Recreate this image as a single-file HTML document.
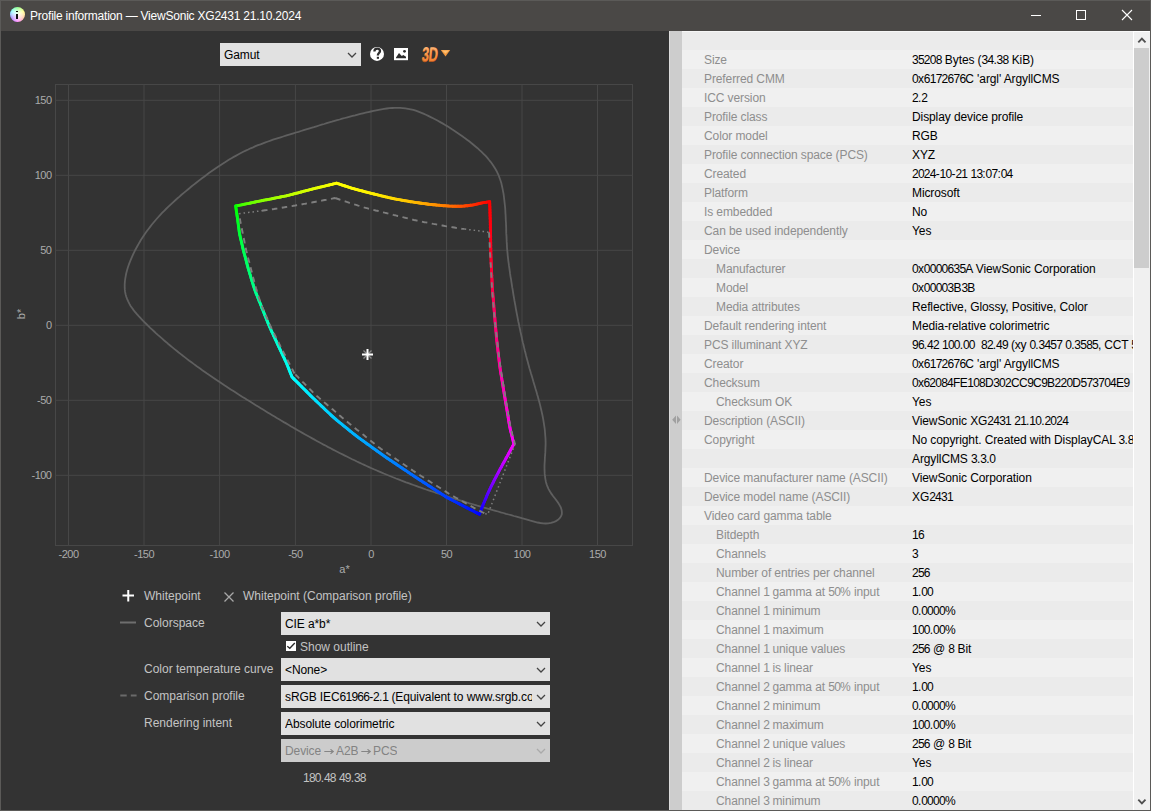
<!DOCTYPE html>
<html><head><meta charset="utf-8"><style>
html,body{margin:0;padding:0;}
body{width:1151px;height:811px;overflow:hidden;position:relative;background:#333;font-family:"Liberation Sans",sans-serif;font-size:12px;}
i{font-style:normal;letter-spacing:-0.75px;}
.abs{position:absolute;}
#title{position:absolute;left:0;top:0;width:1151px;height:31px;background:#4a4846;}
#ttext{position:absolute;left:30px;top:9px;color:#fff;font-size:12px;letter-spacing:-0.22px;white-space:nowrap;}
#ticon{position:absolute;left:10px;top:7px;width:15px;height:15px;border-radius:50%;background:conic-gradient(from 0deg,#80ff80,#ffff80,#ffc0a0,#ff80ff,#a080ff,#80ffff,#80ff80);}
#ticon::after{content:"";position:absolute;left:0;top:0;width:15px;height:15px;border-radius:50%;background:radial-gradient(circle,rgba(255,255,255,0.9) 0,rgba(255,255,255,0.5) 45%,rgba(255,255,255,0) 75%);}
#ticon b{position:absolute;left:5.9px;top:6.8px;width:2px;height:5px;background:#111;z-index:2;}
#ticon b::before{content:"";position:absolute;left:0;top:-3px;width:2px;height:1.7px;background:#111;}
#left{position:absolute;left:1px;top:31px;width:668px;height:779px;background:#333;}
.cb{position:absolute;background:#e1e1e1;color:#000;box-sizing:border-box;}
.cb span{position:absolute;left:4px;top:5px;white-space:nowrap;letter-spacing:-0.1px;overflow:hidden;right:18px;}
.cb .chev{position:absolute;right:4px;top:9px;color:#444;}
.cb.dis{background:#cccccc;color:#838383;}
.cb.dis .chev{color:#aaa;}
.lbl{position:absolute;color:#c3c3c3;white-space:nowrap;font-size:12px;}
#split{position:absolute;left:669px;top:31px;width:13px;height:779px;background:#cdcdcd;border-left:1px solid #dcdcdc;box-sizing:border-box;}
#table{position:absolute;left:682px;top:31px;width:451px;height:779px;overflow:hidden;background:#f0f0f0;}
.r{position:absolute;left:0;width:451px;height:19px;}
.r.e{background:#f0f0f0;}
.r.o{background:#ebebeb;}
.r span{position:absolute;top:3px;white-space:nowrap;}
.r .l{color:#8e8e8e;letter-spacing:-0.1px;}
.r .v{left:230px;color:#000;letter-spacing:-0.1px;}
#sb{position:absolute;left:1133px;top:31px;width:17px;height:779px;background:#f0f0f0;border-left:1px solid #fff;box-sizing:border-box;}
#thumb{position:absolute;left:0px;top:17px;width:15px;height:220px;background:#cdcdcd;}
#bord{position:absolute;left:0;top:0;width:1151px;height:811px;box-sizing:border-box;border:1px solid #5b5a58;pointer-events:none;}
svg text{font-family:"Liberation Sans",sans-serif;}
</style></head><body>
<div id="title"><div id="ticon"><b></b></div><div id="ttext">Profile information — ViewSonic XG2431 21.10.2024</div>
<svg class="abs" style="left:0;top:0" width="1151" height="31">
<line x1="1031" y1="15.5" x2="1041" y2="15.5" stroke="#fff" stroke-width="1"/>
<rect x="1076.5" y="10.5" width="9" height="9" fill="none" stroke="#fff" stroke-width="1"/>
<path d="M1122,10 L1132,20 M1132,10 L1122,20" stroke="#fff" stroke-width="1.1"/>
</svg>
</div>
<div id="left"></div>
<div class="cb" style="left:220px;top:43px;width:141px;height:23px"><span>Gamut</span><svg class="chev" width="10" height="6" viewBox="0 0 10 6"><path d="M1,1 L5,5 L9,1" fill="none" stroke="currentColor" stroke-width="1.25"/></svg></div>
<svg class="abs" style="left:0;top:0" width="669" height="811">
<g stroke="#474747" stroke-width="1" fill="none">
<rect x="55.5" y="84.5" width="577" height="461"/>
<line x1="68.5" y1="84.5" x2="68.5" y2="545.5"/><line x1="144" y1="84.5" x2="144" y2="545.5"/><line x1="219.6" y1="84.5" x2="219.6" y2="545.5"/><line x1="295.4" y1="84.5" x2="295.4" y2="545.5"/><line x1="371" y1="84.5" x2="371" y2="545.5"/><line x1="446.5" y1="84.5" x2="446.5" y2="545.5"/><line x1="522" y1="84.5" x2="522" y2="545.5"/><line x1="597.5" y1="84.5" x2="597.5" y2="545.5"/><line x1="55.5" y1="100.3" x2="632.5" y2="100.3"/><line x1="55.5" y1="175.3" x2="632.5" y2="175.3"/><line x1="55.5" y1="250.3" x2="632.5" y2="250.3"/><line x1="55.5" y1="325.3" x2="632.5" y2="325.3"/><line x1="55.5" y1="400.3" x2="632.5" y2="400.3"/><line x1="55.5" y1="475.3" x2="632.5" y2="475.3"/>
</g>
<g fill="#ababab" font-size="11" letter-spacing="-0.5">
<text x="51.5" y="104.3" text-anchor="end">150</text><text x="51.5" y="179.3" text-anchor="end">100</text><text x="51.5" y="254.3" text-anchor="end">50</text><text x="51.5" y="329.3" text-anchor="end">0</text><text x="51.5" y="404.3" text-anchor="end">-50</text><text x="51.5" y="479.3" text-anchor="end">-100</text><text x="68.5" y="558" text-anchor="middle">-200</text><text x="144" y="558" text-anchor="middle">-150</text><text x="219.6" y="558" text-anchor="middle">-100</text><text x="295.4" y="558" text-anchor="middle">-50</text><text x="371" y="558" text-anchor="middle">0</text><text x="446.5" y="558" text-anchor="middle">50</text><text x="522" y="558" text-anchor="middle">100</text><text x="597.5" y="558" text-anchor="middle">150</text>
<text x="344.5" y="573" text-anchor="middle" letter-spacing="0">a*</text>
<text transform="translate(25,314) rotate(-90)" text-anchor="middle" letter-spacing="0">b*</text>
</g>
<path d="M394.8,107.9 L397.4,107.8 L400.1,107.9 L402.8,108.1 L405.4,108.4 L408.1,108.8 L410.7,109.3 L413.3,109.9 L415.8,110.7 L418.4,111.6 L420.9,112.6 L423.4,113.6 L425.9,114.7 L428.3,115.9 L430.7,117.1 L433.1,118.3 L435.5,119.5 L437.9,120.8 L440.2,122.1 L442.5,123.4 L444.8,124.8 L447.1,126.1 L449.4,127.5 L451.6,129.0 L453.9,130.4 L456.1,131.9 L458.3,133.4 L460.5,134.9 L462.7,136.5 L464.8,138.1 L467.0,139.7 L469.2,141.3 L471.3,143.0 L473.4,144.7 L475.5,146.5 L477.6,148.2 L479.6,150.1 L481.6,151.9 L483.5,153.8 L485.4,155.7 L487.2,157.7 L488.9,159.8 L490.6,161.8 L492.2,164.0 L493.7,166.2 L495.1,168.4 L496.4,170.7 L497.6,173.1 L498.7,175.5 L499.6,178.0 L500.5,180.5 L501.3,183.1 L501.9,185.7 L502.5,188.4 L503.0,191.1 L503.5,193.7 L503.9,196.4 L504.2,199.1 L504.5,201.8 L504.8,204.5 L505.1,207.1 L505.3,209.8 L505.4,212.5 L505.6,215.2 L505.7,217.8 L505.8,220.5 L506.0,223.2 L506.1,225.9 L506.2,228.5 L506.2,231.2 L506.3,233.9 L506.5,236.6 L506.6,239.2 L506.7,241.9 L506.9,244.6 L507.0,247.2 L507.2,249.9 L507.5,252.6 L507.7,255.3 L508.0,257.9 L508.3,260.6 L508.7,263.3 L509.0,265.9 L509.4,268.6 L509.8,271.3 L510.1,273.9 L510.5,276.6 L511.0,279.2 L511.4,281.9 L511.8,284.5 L512.2,287.2 L512.7,289.8 L513.1,292.5 L513.5,295.1 L514.0,297.8 L514.4,300.4 L514.9,303.1 L515.4,305.7 L515.8,308.3 L516.3,311.0 L516.8,313.6 L517.3,316.2 L517.8,318.8 L518.3,321.5 L518.9,324.1 L519.4,326.7 L520.0,329.3 L520.5,331.9 L521.1,334.5 L521.7,337.2 L522.2,339.8 L522.8,342.4 L523.5,345.0 L524.1,347.6 L524.7,350.2 L525.4,352.8 L526.0,355.4 L526.7,358.0 L527.4,360.6 L528.1,363.2 L528.8,365.8 L529.5,368.4 L530.3,370.9 L531.0,373.5 L531.8,376.1 L532.6,378.7 L533.3,381.3 L534.1,383.9 L534.9,386.5 L535.6,389.0 L536.4,391.6 L537.1,394.2 L537.9,396.8 L538.6,399.4 L539.3,402.0 L540.0,404.6 L540.6,407.2 L541.2,409.8 L541.8,412.4 L542.4,415.0 L542.9,417.7 L543.4,420.3 L543.8,422.9 L544.2,425.6 L544.6,428.2 L544.9,430.9 L545.1,433.5 L545.3,436.2 L545.5,438.9 L545.6,441.6 L545.6,444.3 L545.5,447.0 L545.4,449.7 L545.3,452.4 L545.1,455.1 L544.9,457.8 L544.8,460.5 L544.6,463.2 L544.5,465.9 L544.5,468.6 L544.6,471.3 L544.7,473.9 L545.0,476.5 L545.4,479.1 L545.9,481.7 L546.6,484.2 L547.5,486.7 L548.6,489.1 L550.0,491.5 L551.5,493.9 L553.2,496.2 L555.0,498.5 L556.7,500.8 L558.3,503.1 L559.7,505.4 L560.9,507.7 L561.6,510.0 L561.9,512.3 L561.8,514.4 L561.0,516.4 L559.7,518.2 L558.0,519.8 L555.9,521.1 L553.5,522.2 L550.9,522.9 L548.3,523.4 L545.6,523.5 L543.0,523.4 L540.3,523.0 L537.6,522.5 L535.0,521.8 L532.3,521.1 L529.7,520.4 L527.1,519.6 L524.4,518.9 L521.8,518.2 L519.1,517.4 L516.5,516.7 L513.9,516.0 L511.2,515.2 L508.6,514.5 L506.0,513.8 L503.4,513.0 L500.7,512.3 L498.1,511.5 L495.5,510.8 L492.9,510.1 L490.3,509.3 L487.7,508.6 L485.1,507.8 L482.5,507.1 L479.9,506.3 L477.3,505.6 L474.7,504.8 L472.1,504.0 L469.5,503.3 L466.9,502.5 L464.4,501.7 L461.8,500.9 L459.2,500.2 L456.6,499.4 L454.1,498.6 L451.5,497.8 L449.0,497.0 L446.4,496.2 L443.8,495.3 L441.3,494.5 L438.8,493.7 L436.2,492.9 L433.7,492.0 L431.1,491.2 L428.6,490.3 L426.1,489.5 L423.6,488.6 L421.0,487.7 L418.5,486.8 L416.0,485.9 L413.5,485.0 L411.0,484.1 L408.5,483.2 L406.0,482.3 L403.5,481.3 L401.0,480.4 L398.5,479.4 L396.0,478.5 L393.6,477.5 L391.1,476.5 L388.6,475.5 L386.2,474.5 L383.7,473.5 L381.2,472.4 L378.8,471.4 L376.3,470.3 L373.9,469.3 L371.5,468.2 L369.0,467.1 L366.6,466.0 L364.2,464.9 L361.7,463.8 L359.3,462.6 L356.9,461.5 L354.5,460.3 L352.1,459.2 L349.7,458.0 L347.3,456.8 L344.9,455.6 L342.5,454.4 L340.1,453.2 L337.7,452.0 L335.3,450.8 L333.0,449.6 L330.6,448.3 L328.2,447.1 L325.9,445.8 L323.5,444.6 L321.1,443.3 L318.8,442.0 L316.4,440.7 L314.1,439.4 L311.7,438.1 L309.4,436.8 L307.0,435.5 L304.7,434.2 L302.4,432.9 L300.0,431.5 L297.7,430.2 L295.4,428.9 L293.0,427.5 L290.7,426.2 L288.4,424.8 L286.1,423.4 L283.8,422.1 L281.5,420.7 L279.1,419.3 L276.8,418.0 L274.5,416.6 L272.2,415.2 L269.9,413.8 L267.6,412.4 L265.3,411.0 L263.0,409.6 L260.7,408.2 L258.5,406.8 L256.2,405.4 L253.9,404.0 L251.6,402.6 L249.3,401.1 L247.0,399.7 L244.8,398.3 L242.5,396.9 L240.2,395.4 L237.9,394.0 L235.7,392.6 L233.4,391.1 L231.2,389.7 L228.9,388.2 L226.7,386.7 L224.4,385.3 L222.2,383.8 L220.0,382.3 L217.7,380.8 L215.5,379.3 L213.3,377.8 L211.1,376.3 L208.9,374.8 L206.7,373.3 L204.5,371.7 L202.3,370.2 L200.1,368.6 L197.9,367.1 L195.8,365.5 L193.6,363.9 L191.5,362.3 L189.3,360.7 L187.2,359.1 L185.0,357.4 L182.9,355.8 L180.8,354.1 L178.7,352.5 L176.6,350.8 L174.5,349.1 L172.4,347.4 L170.4,345.7 L168.3,344.0 L166.3,342.2 L164.2,340.5 L162.2,338.7 L160.2,336.9 L158.1,335.1 L156.1,333.3 L154.2,331.5 L152.2,329.6 L150.2,327.8 L148.2,325.9 L146.3,324.0 L144.4,322.1 L142.4,320.2 L140.6,318.2 L138.7,316.2 L136.9,314.2 L135.2,312.2 L133.6,310.1 L132.1,308.0 L130.6,305.9 L129.3,303.7 L128.2,301.4 L127.2,299.1 L126.3,296.8 L125.6,294.4 L125.1,291.9 L124.8,289.4 L124.7,286.8 L124.7,284.2 L124.9,281.6 L125.2,278.9 L125.7,276.2 L126.2,273.5 L126.9,270.8 L127.7,268.0 L128.6,265.3 L129.6,262.6 L130.7,259.9 L131.8,257.3 L133.0,254.7 L134.2,252.1 L135.5,249.5 L136.9,247.0 L138.2,244.6 L139.6,242.2 L141.0,239.8 L142.5,237.5 L144.0,235.3 L145.5,233.0 L147.1,230.8 L148.7,228.7 L150.3,226.6 L151.9,224.5 L153.6,222.5 L155.3,220.5 L157.0,218.5 L158.8,216.5 L160.5,214.6 L162.3,212.7 L164.2,210.8 L166.0,209.0 L167.9,207.2 L169.8,205.4 L171.7,203.6 L173.6,201.8 L175.6,200.0 L177.5,198.3 L179.5,196.6 L181.5,194.8 L183.5,193.1 L185.6,191.4 L187.6,189.7 L189.7,188.0 L191.7,186.3 L193.8,184.6 L195.9,183.0 L198.1,181.3 L200.2,179.6 L202.3,178.0 L204.5,176.4 L206.7,174.8 L208.9,173.1 L211.1,171.6 L213.3,170.0 L215.5,168.4 L217.7,166.9 L220.0,165.4 L222.3,163.9 L224.6,162.5 L226.9,161.0 L229.2,159.6 L231.5,158.2 L233.8,156.9 L236.2,155.6 L238.6,154.3 L240.9,153.0 L243.3,151.8 L245.7,150.6 L248.2,149.5 L250.6,148.3 L253.1,147.3 L255.5,146.2 L258.0,145.2 L260.5,144.3 L263.0,143.3 L265.5,142.4 L268.0,141.5 L270.5,140.6 L273.0,139.7 L275.6,138.9 L278.1,138.1 L280.7,137.3 L283.2,136.5 L285.8,135.7 L288.3,134.9 L290.9,134.1 L293.4,133.3 L296.0,132.5 L298.5,131.8 L301.1,131.0 L303.7,130.2 L306.2,129.4 L308.8,128.6 L311.3,127.8 L313.9,127.1 L316.5,126.3 L319.0,125.5 L321.6,124.7 L324.2,124.0 L326.7,123.2 L329.3,122.4 L331.9,121.7 L334.5,120.9 L337.1,120.2 L339.6,119.5 L342.2,118.7 L344.8,118.0 L347.4,117.3 L350.0,116.6 L352.6,115.9 L355.2,115.3 L357.8,114.6 L360.4,113.9 L363.0,113.3 L365.6,112.7 L368.3,112.1 L370.9,111.5 L373.5,110.9 L376.2,110.3 L378.8,109.8 L381.4,109.3 L384.1,108.9 L386.8,108.5 L389.4,108.2 L392.1,108.0 L394.8,107.9Z" fill="none" stroke="#5f5f5f" stroke-width="1.8"/>
<g stroke-width="2.9" stroke-linecap="round"><line x1="235.7" y1="206.0" x2="237.2" y2="205.7" stroke="rgb(21,255,0)"/><line x1="237.2" y1="205.7" x2="238.7" y2="205.4" stroke="rgb(37,255,0)"/><line x1="238.7" y1="205.4" x2="240.2" y2="205.1" stroke="rgb(48,255,0)"/><line x1="240.2" y1="205.1" x2="241.7" y2="204.8" stroke="rgb(57,255,0)"/><line x1="241.7" y1="204.8" x2="243.1" y2="204.5" stroke="rgb(65,255,0)"/><line x1="243.1" y1="204.5" x2="244.6" y2="204.2" stroke="rgb(72,255,0)"/><line x1="244.6" y1="204.2" x2="246.1" y2="203.9" stroke="rgb(78,255,0)"/><line x1="246.1" y1="203.9" x2="247.6" y2="203.6" stroke="rgb(84,255,0)"/><line x1="247.6" y1="203.6" x2="249.1" y2="203.3" stroke="rgb(90,255,0)"/><line x1="249.1" y1="203.3" x2="250.6" y2="203.0" stroke="rgb(95,255,0)"/><line x1="250.6" y1="203.0" x2="252.1" y2="202.7" stroke="rgb(100,255,0)"/><line x1="252.1" y1="202.7" x2="253.6" y2="202.3" stroke="rgb(104,255,0)"/><line x1="253.6" y1="202.3" x2="255.1" y2="202.0" stroke="rgb(109,255,0)"/><line x1="255.1" y1="202.0" x2="256.6" y2="201.7" stroke="rgb(113,255,0)"/><line x1="256.6" y1="201.7" x2="258.0" y2="201.4" stroke="rgb(117,255,0)"/><line x1="258.0" y1="201.4" x2="259.5" y2="201.1" stroke="rgb(121,255,0)"/><line x1="259.5" y1="201.1" x2="261.0" y2="200.8" stroke="rgb(125,255,0)"/><line x1="261.0" y1="200.8" x2="262.5" y2="200.5" stroke="rgb(129,255,0)"/><line x1="262.5" y1="200.5" x2="264.0" y2="200.2" stroke="rgb(133,255,0)"/><line x1="264.0" y1="200.2" x2="265.5" y2="199.9" stroke="rgb(136,255,0)"/><line x1="265.5" y1="199.9" x2="267.0" y2="199.7" stroke="rgb(140,255,0)"/><line x1="267.0" y1="199.7" x2="268.5" y2="199.4" stroke="rgb(143,255,0)"/><line x1="268.5" y1="199.4" x2="270.0" y2="199.1" stroke="rgb(146,255,0)"/><line x1="270.0" y1="199.1" x2="271.5" y2="198.8" stroke="rgb(149,255,0)"/><line x1="271.5" y1="198.8" x2="273.0" y2="198.5" stroke="rgb(153,255,0)"/><line x1="273.0" y1="198.5" x2="274.4" y2="198.2" stroke="rgb(156,255,0)"/><line x1="274.4" y1="198.2" x2="275.9" y2="197.9" stroke="rgb(159,255,0)"/><line x1="275.9" y1="197.9" x2="277.4" y2="197.6" stroke="rgb(162,255,0)"/><line x1="277.4" y1="197.6" x2="278.9" y2="197.3" stroke="rgb(165,255,0)"/><line x1="278.9" y1="197.3" x2="280.4" y2="197.0" stroke="rgb(167,255,0)"/><line x1="280.4" y1="197.0" x2="281.9" y2="196.7" stroke="rgb(170,255,0)"/><line x1="281.9" y1="196.7" x2="283.4" y2="196.4" stroke="rgb(173,255,0)"/><line x1="283.4" y1="196.4" x2="284.9" y2="196.1" stroke="rgb(176,255,0)"/><line x1="284.9" y1="196.1" x2="286.4" y2="195.8" stroke="rgb(178,255,0)"/><line x1="286.4" y1="195.8" x2="287.8" y2="195.4" stroke="rgb(181,255,0)"/><line x1="287.8" y1="195.4" x2="289.3" y2="195.1" stroke="rgb(184,255,0)"/><line x1="289.3" y1="195.1" x2="290.8" y2="194.7" stroke="rgb(186,255,0)"/><line x1="290.8" y1="194.7" x2="292.3" y2="194.3" stroke="rgb(189,255,0)"/><line x1="292.3" y1="194.3" x2="293.7" y2="193.9" stroke="rgb(191,255,0)"/><line x1="293.7" y1="193.9" x2="295.2" y2="193.5" stroke="rgb(194,255,0)"/><line x1="295.2" y1="193.5" x2="296.7" y2="193.2" stroke="rgb(196,255,0)"/><line x1="296.7" y1="193.2" x2="298.1" y2="192.8" stroke="rgb(199,255,0)"/><line x1="298.1" y1="192.8" x2="299.6" y2="192.4" stroke="rgb(201,255,0)"/><line x1="299.6" y1="192.4" x2="301.1" y2="192.0" stroke="rgb(203,255,0)"/><line x1="301.1" y1="192.0" x2="302.6" y2="191.6" stroke="rgb(206,255,0)"/><line x1="302.6" y1="191.6" x2="304.0" y2="191.2" stroke="rgb(208,255,0)"/><line x1="304.0" y1="191.2" x2="305.5" y2="190.8" stroke="rgb(210,255,0)"/><line x1="305.5" y1="190.8" x2="307.0" y2="190.4" stroke="rgb(213,255,0)"/><line x1="307.0" y1="190.4" x2="308.4" y2="190.1" stroke="rgb(215,255,0)"/><line x1="308.4" y1="190.1" x2="309.9" y2="189.7" stroke="rgb(217,255,0)"/><line x1="309.9" y1="189.7" x2="311.4" y2="189.3" stroke="rgb(219,255,0)"/><line x1="311.4" y1="189.3" x2="312.9" y2="188.9" stroke="rgb(221,255,0)"/><line x1="312.9" y1="188.9" x2="314.3" y2="188.6" stroke="rgb(224,255,0)"/><line x1="314.3" y1="188.6" x2="315.8" y2="188.2" stroke="rgb(226,255,0)"/><line x1="315.8" y1="188.2" x2="317.3" y2="187.8" stroke="rgb(228,255,0)"/><line x1="317.3" y1="187.8" x2="318.8" y2="187.5" stroke="rgb(230,255,0)"/><line x1="318.8" y1="187.5" x2="320.2" y2="187.1" stroke="rgb(232,255,0)"/><line x1="320.2" y1="187.1" x2="321.7" y2="186.8" stroke="rgb(234,255,0)"/><line x1="321.7" y1="186.8" x2="323.2" y2="186.4" stroke="rgb(236,255,0)"/><line x1="323.2" y1="186.4" x2="324.7" y2="186.1" stroke="rgb(238,255,0)"/><line x1="324.7" y1="186.1" x2="326.2" y2="185.7" stroke="rgb(240,255,0)"/><line x1="326.2" y1="185.7" x2="327.6" y2="185.3" stroke="rgb(242,255,0)"/><line x1="327.6" y1="185.3" x2="329.1" y2="185.0" stroke="rgb(244,255,0)"/><line x1="329.1" y1="185.0" x2="330.6" y2="184.6" stroke="rgb(246,255,0)"/><line x1="330.6" y1="184.6" x2="332.1" y2="184.3" stroke="rgb(248,255,0)"/><line x1="332.1" y1="184.3" x2="333.5" y2="183.9" stroke="rgb(250,255,0)"/><line x1="333.5" y1="183.9" x2="335.0" y2="183.6" stroke="rgb(252,255,0)"/><line x1="335.0" y1="183.6" x2="336.5" y2="183.2" stroke="rgb(254,255,0)"/><line x1="336.5" y1="183.2" x2="337.9" y2="183.7" stroke="rgb(255,254,0)"/><line x1="337.9" y1="183.7" x2="339.4" y2="184.1" stroke="rgb(255,254,0)"/><line x1="339.4" y1="184.1" x2="340.8" y2="184.6" stroke="rgb(255,254,0)"/><line x1="340.8" y1="184.6" x2="342.2" y2="185.1" stroke="rgb(255,254,0)"/><line x1="342.2" y1="185.1" x2="343.6" y2="185.5" stroke="rgb(255,254,0)"/><line x1="343.6" y1="185.5" x2="345.1" y2="186.0" stroke="rgb(255,254,0)"/><line x1="345.1" y1="186.0" x2="346.5" y2="186.4" stroke="rgb(255,254,0)"/><line x1="346.5" y1="186.4" x2="347.9" y2="186.9" stroke="rgb(255,253,0)"/><line x1="347.9" y1="186.9" x2="349.4" y2="187.4" stroke="rgb(255,253,0)"/><line x1="349.4" y1="187.4" x2="350.8" y2="187.8" stroke="rgb(255,252,0)"/><line x1="350.8" y1="187.8" x2="352.2" y2="188.3" stroke="rgb(255,252,0)"/><line x1="352.2" y1="188.3" x2="353.7" y2="188.7" stroke="rgb(255,251,0)"/><line x1="353.7" y1="188.7" x2="355.1" y2="189.1" stroke="rgb(255,251,0)"/><line x1="355.1" y1="189.1" x2="356.6" y2="189.5" stroke="rgb(255,250,0)"/><line x1="356.6" y1="189.5" x2="358.0" y2="189.9" stroke="rgb(255,250,0)"/><line x1="358.0" y1="189.9" x2="359.5" y2="190.3" stroke="rgb(255,249,0)"/><line x1="359.5" y1="190.3" x2="360.9" y2="190.6" stroke="rgb(255,248,0)"/><line x1="360.9" y1="190.6" x2="362.4" y2="191.0" stroke="rgb(255,247,0)"/><line x1="362.4" y1="191.0" x2="363.8" y2="191.4" stroke="rgb(255,246,0)"/><line x1="363.8" y1="191.4" x2="365.3" y2="191.8" stroke="rgb(255,246,0)"/><line x1="365.3" y1="191.8" x2="366.7" y2="192.2" stroke="rgb(255,245,0)"/><line x1="366.7" y1="192.2" x2="368.2" y2="192.6" stroke="rgb(255,244,0)"/><line x1="368.2" y1="192.6" x2="369.6" y2="192.9" stroke="rgb(255,243,0)"/><line x1="369.6" y1="192.9" x2="371.1" y2="193.3" stroke="rgb(255,241,0)"/><line x1="371.1" y1="193.3" x2="372.6" y2="193.7" stroke="rgb(255,240,0)"/><line x1="372.6" y1="193.7" x2="374.0" y2="194.0" stroke="rgb(255,239,0)"/><line x1="374.0" y1="194.0" x2="375.5" y2="194.4" stroke="rgb(255,238,0)"/><line x1="375.5" y1="194.4" x2="376.9" y2="194.7" stroke="rgb(255,237,0)"/><line x1="376.9" y1="194.7" x2="378.4" y2="195.1" stroke="rgb(255,235,0)"/><line x1="378.4" y1="195.1" x2="379.9" y2="195.4" stroke="rgb(255,234,0)"/><line x1="379.9" y1="195.4" x2="381.3" y2="195.8" stroke="rgb(255,233,0)"/><line x1="381.3" y1="195.8" x2="382.8" y2="196.2" stroke="rgb(255,231,0)"/><line x1="382.8" y1="196.2" x2="384.2" y2="196.5" stroke="rgb(255,230,0)"/><line x1="384.2" y1="196.5" x2="385.7" y2="196.9" stroke="rgb(255,228,0)"/><line x1="385.7" y1="196.9" x2="387.2" y2="197.2" stroke="rgb(255,226,0)"/><line x1="387.2" y1="197.2" x2="388.6" y2="197.6" stroke="rgb(255,225,0)"/><line x1="388.6" y1="197.6" x2="390.1" y2="197.9" stroke="rgb(255,223,0)"/><line x1="390.1" y1="197.9" x2="391.5" y2="198.2" stroke="rgb(255,221,0)"/><line x1="391.5" y1="198.2" x2="393.0" y2="198.5" stroke="rgb(255,220,0)"/><line x1="393.0" y1="198.5" x2="394.5" y2="198.8" stroke="rgb(255,218,0)"/><line x1="394.5" y1="198.8" x2="396.0" y2="199.1" stroke="rgb(255,216,0)"/><line x1="396.0" y1="199.1" x2="397.4" y2="199.4" stroke="rgb(255,214,0)"/><line x1="397.4" y1="199.4" x2="398.9" y2="199.6" stroke="rgb(255,212,0)"/><line x1="398.9" y1="199.6" x2="400.4" y2="199.9" stroke="rgb(255,210,0)"/><line x1="400.4" y1="199.9" x2="401.9" y2="200.2" stroke="rgb(255,208,0)"/><line x1="401.9" y1="200.2" x2="403.4" y2="200.4" stroke="rgb(255,206,0)"/><line x1="403.4" y1="200.4" x2="404.8" y2="200.7" stroke="rgb(255,204,0)"/><line x1="404.8" y1="200.7" x2="406.3" y2="200.9" stroke="rgb(255,201,0)"/><line x1="406.3" y1="200.9" x2="407.8" y2="201.2" stroke="rgb(255,199,0)"/><line x1="407.8" y1="201.2" x2="409.3" y2="201.5" stroke="rgb(255,197,0)"/><line x1="409.3" y1="201.5" x2="410.8" y2="201.7" stroke="rgb(255,194,0)"/><line x1="410.8" y1="201.7" x2="412.3" y2="201.9" stroke="rgb(255,192,0)"/><line x1="412.3" y1="201.9" x2="413.7" y2="202.1" stroke="rgb(255,189,0)"/><line x1="413.7" y1="202.1" x2="415.2" y2="202.4" stroke="rgb(255,187,0)"/><line x1="415.2" y1="202.4" x2="416.7" y2="202.6" stroke="rgb(255,184,0)"/><line x1="416.7" y1="202.6" x2="418.2" y2="202.8" stroke="rgb(255,182,0)"/><line x1="418.2" y1="202.8" x2="419.7" y2="203.0" stroke="rgb(255,179,0)"/><line x1="419.7" y1="203.0" x2="421.2" y2="203.2" stroke="rgb(255,177,0)"/><line x1="421.2" y1="203.2" x2="422.7" y2="203.4" stroke="rgb(255,174,0)"/><line x1="422.7" y1="203.4" x2="424.1" y2="203.6" stroke="rgb(255,171,0)"/><line x1="424.1" y1="203.6" x2="425.6" y2="203.8" stroke="rgb(255,168,0)"/><line x1="425.6" y1="203.8" x2="427.1" y2="204.0" stroke="rgb(255,165,0)"/><line x1="427.1" y1="204.0" x2="428.6" y2="204.2" stroke="rgb(255,162,0)"/><line x1="428.6" y1="204.2" x2="430.1" y2="204.4" stroke="rgb(255,159,0)"/><line x1="430.1" y1="204.4" x2="431.6" y2="204.5" stroke="rgb(255,156,0)"/><line x1="431.6" y1="204.5" x2="433.1" y2="204.7" stroke="rgb(255,153,0)"/><line x1="433.1" y1="204.7" x2="434.6" y2="204.8" stroke="rgb(255,150,0)"/><line x1="434.6" y1="204.8" x2="436.1" y2="205.0" stroke="rgb(255,147,0)"/><line x1="436.1" y1="205.0" x2="437.6" y2="205.1" stroke="rgb(255,144,0)"/><line x1="437.6" y1="205.1" x2="439.1" y2="205.3" stroke="rgb(255,141,0)"/><line x1="439.1" y1="205.3" x2="440.6" y2="205.4" stroke="rgb(255,137,0)"/><line x1="440.6" y1="205.4" x2="442.1" y2="205.6" stroke="rgb(255,134,0)"/><line x1="442.1" y1="205.6" x2="443.6" y2="205.7" stroke="rgb(255,131,0)"/><line x1="443.6" y1="205.7" x2="445.1" y2="205.8" stroke="rgb(255,127,0)"/><line x1="445.1" y1="205.8" x2="446.6" y2="205.9" stroke="rgb(255,124,0)"/><line x1="446.6" y1="205.9" x2="448.1" y2="206.0" stroke="rgb(255,120,0)"/><line x1="448.1" y1="206.0" x2="449.6" y2="206.1" stroke="rgb(255,116,0)"/><line x1="449.6" y1="206.1" x2="451.1" y2="206.1" stroke="rgb(255,113,0)"/><line x1="451.1" y1="206.1" x2="452.6" y2="206.2" stroke="rgb(255,109,0)"/><line x1="452.6" y1="206.2" x2="454.1" y2="206.2" stroke="rgb(255,105,0)"/><line x1="454.1" y1="206.2" x2="455.6" y2="206.3" stroke="rgb(255,102,0)"/><line x1="455.6" y1="206.3" x2="457.1" y2="206.3" stroke="rgb(255,98,0)"/><line x1="457.1" y1="206.3" x2="458.6" y2="206.3" stroke="rgb(255,94,0)"/><line x1="458.6" y1="206.3" x2="460.1" y2="206.3" stroke="rgb(255,90,0)"/><line x1="460.1" y1="206.3" x2="461.6" y2="206.2" stroke="rgb(255,86,0)"/><line x1="461.6" y1="206.2" x2="463.1" y2="206.1" stroke="rgb(255,82,0)"/><line x1="463.1" y1="206.1" x2="464.6" y2="206.0" stroke="rgb(255,78,0)"/><line x1="464.6" y1="206.0" x2="466.1" y2="205.8" stroke="rgb(255,74,0)"/><line x1="466.1" y1="205.8" x2="467.6" y2="205.7" stroke="rgb(255,70,0)"/><line x1="467.6" y1="205.7" x2="469.0" y2="205.5" stroke="rgb(255,66,0)"/><line x1="469.0" y1="205.5" x2="470.5" y2="205.3" stroke="rgb(255,61,0)"/><line x1="470.5" y1="205.3" x2="472.0" y2="205.1" stroke="rgb(255,57,0)"/><line x1="472.0" y1="205.1" x2="473.5" y2="204.9" stroke="rgb(255,53,0)"/><line x1="473.5" y1="204.9" x2="475.0" y2="204.6" stroke="rgb(255,48,0)"/><line x1="475.0" y1="204.6" x2="476.4" y2="204.2" stroke="rgb(255,44,0)"/><line x1="476.4" y1="204.2" x2="477.9" y2="203.9" stroke="rgb(255,39,0)"/><line x1="477.9" y1="203.9" x2="479.4" y2="203.5" stroke="rgb(255,35,0)"/><line x1="479.4" y1="203.5" x2="480.8" y2="203.2" stroke="rgb(255,30,0)"/><line x1="480.8" y1="203.2" x2="482.3" y2="202.9" stroke="rgb(255,26,0)"/><line x1="482.3" y1="202.9" x2="483.8" y2="202.6" stroke="rgb(255,21,0)"/><line x1="483.8" y1="202.6" x2="485.2" y2="202.4" stroke="rgb(255,16,0)"/><line x1="485.2" y1="202.4" x2="486.7" y2="202.2" stroke="rgb(255,12,0)"/><line x1="486.7" y1="202.2" x2="488.2" y2="201.9" stroke="rgb(255,7,0)"/><line x1="488.2" y1="201.9" x2="489.7" y2="201.7" stroke="rgb(255,2,0)"/><line x1="489.7" y1="201.7" x2="489.7" y2="203.2" stroke="rgb(255,0,0)"/><line x1="489.7" y1="203.2" x2="489.8" y2="204.7" stroke="rgb(255,0,0)"/><line x1="489.8" y1="204.7" x2="489.8" y2="206.2" stroke="rgb(255,0,1)"/><line x1="489.8" y1="206.2" x2="489.9" y2="207.7" stroke="rgb(255,0,2)"/><line x1="489.9" y1="207.7" x2="489.9" y2="209.2" stroke="rgb(255,0,3)"/><line x1="489.9" y1="209.2" x2="490.0" y2="210.7" stroke="rgb(255,0,4)"/><line x1="490.0" y1="210.7" x2="490.0" y2="212.2" stroke="rgb(255,0,5)"/><line x1="490.0" y1="212.2" x2="490.0" y2="213.7" stroke="rgb(255,0,6)"/><line x1="490.0" y1="213.7" x2="490.1" y2="215.3" stroke="rgb(255,0,7)"/><line x1="490.1" y1="215.3" x2="490.1" y2="216.8" stroke="rgb(255,0,8)"/><line x1="490.1" y1="216.8" x2="490.2" y2="218.3" stroke="rgb(255,0,9)"/><line x1="490.2" y1="218.3" x2="490.2" y2="219.8" stroke="rgb(255,0,10)"/><line x1="490.2" y1="219.8" x2="490.3" y2="221.3" stroke="rgb(255,0,11)"/><line x1="490.3" y1="221.3" x2="490.3" y2="222.8" stroke="rgb(255,0,12)"/><line x1="490.3" y1="222.8" x2="490.3" y2="224.3" stroke="rgb(255,0,14)"/><line x1="490.3" y1="224.3" x2="490.4" y2="225.8" stroke="rgb(255,0,15)"/><line x1="490.4" y1="225.8" x2="490.4" y2="227.3" stroke="rgb(255,0,16)"/><line x1="490.4" y1="227.3" x2="490.4" y2="228.8" stroke="rgb(255,0,17)"/><line x1="490.4" y1="228.8" x2="490.5" y2="230.3" stroke="rgb(255,0,18)"/><line x1="490.5" y1="230.3" x2="490.5" y2="231.8" stroke="rgb(255,0,20)"/><line x1="490.5" y1="231.8" x2="490.5" y2="233.3" stroke="rgb(255,0,21)"/><line x1="490.5" y1="233.3" x2="490.5" y2="234.8" stroke="rgb(255,0,22)"/><line x1="490.5" y1="234.8" x2="490.6" y2="236.3" stroke="rgb(255,0,23)"/><line x1="490.6" y1="236.3" x2="490.6" y2="237.8" stroke="rgb(255,0,25)"/><line x1="490.6" y1="237.8" x2="490.6" y2="239.3" stroke="rgb(255,0,26)"/><line x1="490.6" y1="239.3" x2="490.6" y2="240.9" stroke="rgb(255,0,27)"/><line x1="490.6" y1="240.9" x2="490.7" y2="242.4" stroke="rgb(255,0,29)"/><line x1="490.7" y1="242.4" x2="490.7" y2="243.9" stroke="rgb(255,0,30)"/><line x1="490.7" y1="243.9" x2="490.7" y2="245.4" stroke="rgb(255,0,31)"/><line x1="490.7" y1="245.4" x2="490.7" y2="246.9" stroke="rgb(255,0,33)"/><line x1="490.7" y1="246.9" x2="490.8" y2="248.4" stroke="rgb(255,0,34)"/><line x1="490.8" y1="248.4" x2="490.8" y2="249.9" stroke="rgb(255,0,35)"/><line x1="490.8" y1="249.9" x2="490.8" y2="251.4" stroke="rgb(255,0,37)"/><line x1="490.8" y1="251.4" x2="490.8" y2="252.9" stroke="rgb(255,0,38)"/><line x1="490.8" y1="252.9" x2="490.9" y2="254.4" stroke="rgb(255,0,39)"/><line x1="490.9" y1="254.4" x2="490.9" y2="255.9" stroke="rgb(255,0,41)"/><line x1="490.9" y1="255.9" x2="491.0" y2="257.4" stroke="rgb(255,0,42)"/><line x1="491.0" y1="257.4" x2="491.0" y2="258.9" stroke="rgb(255,0,44)"/><line x1="491.0" y1="258.9" x2="491.1" y2="260.4" stroke="rgb(255,0,45)"/><line x1="491.1" y1="260.4" x2="491.1" y2="261.9" stroke="rgb(255,0,46)"/><line x1="491.1" y1="261.9" x2="491.2" y2="263.4" stroke="rgb(255,0,48)"/><line x1="491.2" y1="263.4" x2="491.3" y2="264.9" stroke="rgb(255,0,49)"/><line x1="491.3" y1="264.9" x2="491.3" y2="266.4" stroke="rgb(255,0,51)"/><line x1="491.3" y1="266.4" x2="491.4" y2="268.0" stroke="rgb(255,0,52)"/><line x1="491.4" y1="268.0" x2="491.5" y2="269.5" stroke="rgb(255,0,54)"/><line x1="491.5" y1="269.5" x2="491.5" y2="271.0" stroke="rgb(255,0,55)"/><line x1="491.5" y1="271.0" x2="491.6" y2="272.5" stroke="rgb(255,0,57)"/><line x1="491.6" y1="272.5" x2="491.7" y2="274.0" stroke="rgb(255,0,58)"/><line x1="491.7" y1="274.0" x2="491.8" y2="275.5" stroke="rgb(255,0,59)"/><line x1="491.8" y1="275.5" x2="491.8" y2="277.0" stroke="rgb(255,0,61)"/><line x1="491.8" y1="277.0" x2="491.9" y2="278.5" stroke="rgb(255,0,62)"/><line x1="491.9" y1="278.5" x2="492.0" y2="280.0" stroke="rgb(255,0,64)"/><line x1="492.0" y1="280.0" x2="492.0" y2="281.5" stroke="rgb(255,0,65)"/><line x1="492.0" y1="281.5" x2="492.1" y2="283.0" stroke="rgb(255,0,67)"/><line x1="492.1" y1="283.0" x2="492.2" y2="284.5" stroke="rgb(255,0,68)"/><line x1="492.2" y1="284.5" x2="492.2" y2="286.0" stroke="rgb(255,0,70)"/><line x1="492.2" y1="286.0" x2="492.3" y2="287.5" stroke="rgb(255,0,72)"/><line x1="492.3" y1="287.5" x2="492.4" y2="289.0" stroke="rgb(255,0,73)"/><line x1="492.4" y1="289.0" x2="492.5" y2="290.5" stroke="rgb(255,0,75)"/><line x1="492.5" y1="290.5" x2="492.7" y2="292.0" stroke="rgb(255,0,76)"/><line x1="492.7" y1="292.0" x2="492.8" y2="293.5" stroke="rgb(255,0,78)"/><line x1="492.8" y1="293.5" x2="492.9" y2="295.0" stroke="rgb(255,0,79)"/><line x1="492.9" y1="295.0" x2="493.0" y2="296.5" stroke="rgb(255,0,81)"/><line x1="493.0" y1="296.5" x2="493.2" y2="298.0" stroke="rgb(255,0,82)"/><line x1="493.2" y1="298.0" x2="493.3" y2="299.5" stroke="rgb(255,0,84)"/><line x1="493.3" y1="299.5" x2="493.4" y2="301.0" stroke="rgb(255,0,86)"/><line x1="493.4" y1="301.0" x2="493.5" y2="302.5" stroke="rgb(255,0,87)"/><line x1="493.5" y1="302.5" x2="493.7" y2="304.0" stroke="rgb(255,0,89)"/><line x1="493.7" y1="304.0" x2="493.8" y2="305.5" stroke="rgb(255,0,90)"/><line x1="493.8" y1="305.5" x2="493.9" y2="307.0" stroke="rgb(255,0,92)"/><line x1="493.9" y1="307.0" x2="494.0" y2="308.5" stroke="rgb(255,0,93)"/><line x1="494.0" y1="308.5" x2="494.1" y2="310.0" stroke="rgb(255,0,95)"/><line x1="494.1" y1="310.0" x2="494.3" y2="311.5" stroke="rgb(255,0,97)"/><line x1="494.3" y1="311.5" x2="494.4" y2="313.0" stroke="rgb(255,0,98)"/><line x1="494.4" y1="313.0" x2="494.5" y2="314.5" stroke="rgb(255,0,100)"/><line x1="494.5" y1="314.5" x2="494.6" y2="316.0" stroke="rgb(255,0,102)"/><line x1="494.6" y1="316.0" x2="494.8" y2="317.5" stroke="rgb(255,0,103)"/><line x1="494.8" y1="317.5" x2="494.9" y2="319.0" stroke="rgb(255,0,105)"/><line x1="494.9" y1="319.0" x2="495.0" y2="320.5" stroke="rgb(255,0,106)"/><line x1="495.0" y1="320.5" x2="495.1" y2="322.0" stroke="rgb(255,0,108)"/><line x1="495.1" y1="322.0" x2="495.3" y2="323.5" stroke="rgb(255,0,110)"/><line x1="495.3" y1="323.5" x2="495.4" y2="325.0" stroke="rgb(255,0,111)"/><line x1="495.4" y1="325.0" x2="495.5" y2="326.5" stroke="rgb(255,0,113)"/><line x1="495.5" y1="326.5" x2="495.7" y2="328.0" stroke="rgb(255,0,115)"/><line x1="495.7" y1="328.0" x2="495.8" y2="329.5" stroke="rgb(255,0,116)"/><line x1="495.8" y1="329.5" x2="495.9" y2="331.0" stroke="rgb(255,0,118)"/><line x1="495.9" y1="331.0" x2="496.1" y2="332.5" stroke="rgb(255,0,120)"/><line x1="496.1" y1="332.5" x2="496.2" y2="334.0" stroke="rgb(255,0,121)"/><line x1="496.2" y1="334.0" x2="496.3" y2="335.6" stroke="rgb(255,0,123)"/><line x1="496.3" y1="335.6" x2="496.4" y2="337.1" stroke="rgb(255,0,125)"/><line x1="496.4" y1="337.1" x2="496.6" y2="338.6" stroke="rgb(255,0,126)"/><line x1="496.6" y1="338.6" x2="496.7" y2="340.0" stroke="rgb(255,0,128)"/><line x1="496.7" y1="340.0" x2="496.9" y2="341.5" stroke="rgb(255,0,130)"/><line x1="496.9" y1="341.5" x2="497.1" y2="343.0" stroke="rgb(255,0,131)"/><line x1="497.1" y1="343.0" x2="497.2" y2="344.5" stroke="rgb(255,0,133)"/><line x1="497.2" y1="344.5" x2="497.4" y2="346.0" stroke="rgb(255,0,135)"/><line x1="497.4" y1="346.0" x2="497.6" y2="347.5" stroke="rgb(255,0,136)"/><line x1="497.6" y1="347.5" x2="497.8" y2="349.0" stroke="rgb(255,0,138)"/><line x1="497.8" y1="349.0" x2="497.9" y2="350.5" stroke="rgb(255,0,140)"/><line x1="497.9" y1="350.5" x2="498.1" y2="352.0" stroke="rgb(255,0,142)"/><line x1="498.1" y1="352.0" x2="498.3" y2="353.5" stroke="rgb(255,0,143)"/><line x1="498.3" y1="353.5" x2="498.5" y2="355.0" stroke="rgb(255,0,145)"/><line x1="498.5" y1="355.0" x2="498.6" y2="356.5" stroke="rgb(255,0,147)"/><line x1="498.6" y1="356.5" x2="498.8" y2="358.0" stroke="rgb(255,0,148)"/><line x1="498.8" y1="358.0" x2="499.0" y2="359.5" stroke="rgb(255,0,150)"/><line x1="499.0" y1="359.5" x2="499.1" y2="361.0" stroke="rgb(255,0,152)"/><line x1="499.1" y1="361.0" x2="499.3" y2="362.5" stroke="rgb(255,0,154)"/><line x1="499.3" y1="362.5" x2="499.5" y2="364.0" stroke="rgb(255,0,155)"/><line x1="499.5" y1="364.0" x2="499.7" y2="365.5" stroke="rgb(255,0,157)"/><line x1="499.7" y1="365.5" x2="499.9" y2="367.0" stroke="rgb(255,0,159)"/><line x1="499.9" y1="367.0" x2="500.1" y2="368.5" stroke="rgb(255,0,161)"/><line x1="500.1" y1="368.5" x2="500.3" y2="370.0" stroke="rgb(255,0,162)"/><line x1="500.3" y1="370.0" x2="500.5" y2="371.4" stroke="rgb(255,0,164)"/><line x1="500.5" y1="371.4" x2="500.8" y2="372.9" stroke="rgb(255,0,166)"/><line x1="500.8" y1="372.9" x2="501.0" y2="374.4" stroke="rgb(255,0,168)"/><line x1="501.0" y1="374.4" x2="501.3" y2="375.9" stroke="rgb(255,0,169)"/><line x1="501.3" y1="375.9" x2="501.5" y2="377.4" stroke="rgb(255,0,171)"/><line x1="501.5" y1="377.4" x2="501.8" y2="378.9" stroke="rgb(255,0,173)"/><line x1="501.8" y1="378.9" x2="502.0" y2="380.4" stroke="rgb(255,0,175)"/><line x1="502.0" y1="380.4" x2="502.3" y2="381.9" stroke="rgb(255,0,176)"/><line x1="502.3" y1="381.9" x2="502.5" y2="383.3" stroke="rgb(255,0,178)"/><line x1="502.5" y1="383.3" x2="502.8" y2="384.8" stroke="rgb(255,0,180)"/><line x1="502.8" y1="384.8" x2="503.0" y2="386.3" stroke="rgb(255,0,182)"/><line x1="503.0" y1="386.3" x2="503.2" y2="387.8" stroke="rgb(255,0,184)"/><line x1="503.2" y1="387.8" x2="503.5" y2="389.3" stroke="rgb(255,0,185)"/><line x1="503.5" y1="389.3" x2="503.7" y2="390.8" stroke="rgb(255,0,187)"/><line x1="503.7" y1="390.8" x2="504.0" y2="392.3" stroke="rgb(255,0,189)"/><line x1="504.0" y1="392.3" x2="504.2" y2="393.7" stroke="rgb(255,0,191)"/><line x1="504.2" y1="393.7" x2="504.5" y2="395.2" stroke="rgb(255,0,193)"/><line x1="504.5" y1="395.2" x2="504.7" y2="396.7" stroke="rgb(255,0,194)"/><line x1="504.7" y1="396.7" x2="505.0" y2="398.2" stroke="rgb(255,0,196)"/><line x1="505.0" y1="398.2" x2="505.2" y2="399.7" stroke="rgb(255,0,198)"/><line x1="505.2" y1="399.7" x2="505.5" y2="401.2" stroke="rgb(255,0,200)"/><line x1="505.5" y1="401.2" x2="505.7" y2="402.7" stroke="rgb(255,0,202)"/><line x1="505.7" y1="402.7" x2="506.0" y2="404.1" stroke="rgb(255,0,203)"/><line x1="506.0" y1="404.1" x2="506.2" y2="405.6" stroke="rgb(255,0,205)"/><line x1="506.2" y1="405.6" x2="506.5" y2="407.1" stroke="rgb(255,0,207)"/><line x1="506.5" y1="407.1" x2="506.7" y2="408.6" stroke="rgb(255,0,209)"/><line x1="506.7" y1="408.6" x2="507.0" y2="410.1" stroke="rgb(255,0,211)"/><line x1="507.0" y1="410.1" x2="507.2" y2="411.6" stroke="rgb(255,0,213)"/><line x1="507.2" y1="411.6" x2="507.5" y2="413.1" stroke="rgb(255,0,214)"/><line x1="507.5" y1="413.1" x2="507.7" y2="414.5" stroke="rgb(255,0,216)"/><line x1="507.7" y1="414.5" x2="508.0" y2="416.0" stroke="rgb(255,0,218)"/><line x1="508.0" y1="416.0" x2="508.2" y2="417.5" stroke="rgb(255,0,220)"/><line x1="508.2" y1="417.5" x2="508.4" y2="419.0" stroke="rgb(255,0,222)"/><line x1="508.4" y1="419.0" x2="508.7" y2="420.5" stroke="rgb(255,0,224)"/><line x1="508.7" y1="420.5" x2="508.9" y2="422.0" stroke="rgb(255,0,226)"/><line x1="508.9" y1="422.0" x2="509.2" y2="423.5" stroke="rgb(255,0,227)"/><line x1="509.2" y1="423.5" x2="509.4" y2="424.9" stroke="rgb(255,0,229)"/><line x1="509.4" y1="424.9" x2="509.7" y2="426.4" stroke="rgb(255,0,231)"/><line x1="509.7" y1="426.4" x2="510.0" y2="427.9" stroke="rgb(255,0,233)"/><line x1="510.0" y1="427.9" x2="510.3" y2="429.4" stroke="rgb(255,0,235)"/><line x1="510.3" y1="429.4" x2="510.6" y2="430.8" stroke="rgb(255,0,237)"/><line x1="510.6" y1="430.8" x2="511.0" y2="432.3" stroke="rgb(255,0,239)"/><line x1="511.0" y1="432.3" x2="511.4" y2="433.8" stroke="rgb(255,0,240)"/><line x1="511.4" y1="433.8" x2="511.7" y2="435.2" stroke="rgb(255,0,242)"/><line x1="511.7" y1="435.2" x2="512.1" y2="436.7" stroke="rgb(255,0,244)"/><line x1="512.1" y1="436.7" x2="512.4" y2="438.2" stroke="rgb(255,0,246)"/><line x1="512.4" y1="438.2" x2="512.8" y2="439.6" stroke="rgb(255,0,248)"/><line x1="512.8" y1="439.6" x2="513.2" y2="441.1" stroke="rgb(255,0,250)"/><line x1="513.2" y1="441.1" x2="513.5" y2="442.5" stroke="rgb(255,0,252)"/><line x1="513.5" y1="442.5" x2="513.9" y2="444.0" stroke="rgb(255,0,254)"/><line x1="513.9" y1="444.0" x2="513.2" y2="445.3" stroke="rgb(253,0,255)"/><line x1="513.2" y1="445.3" x2="512.4" y2="446.6" stroke="rgb(249,0,255)"/><line x1="512.4" y1="446.6" x2="511.7" y2="448.0" stroke="rgb(245,0,255)"/><line x1="511.7" y1="448.0" x2="511.0" y2="449.3" stroke="rgb(241,0,255)"/><line x1="511.0" y1="449.3" x2="510.3" y2="450.6" stroke="rgb(237,0,255)"/><line x1="510.3" y1="450.6" x2="509.5" y2="451.9" stroke="rgb(233,0,255)"/><line x1="509.5" y1="451.9" x2="508.8" y2="453.2" stroke="rgb(229,0,255)"/><line x1="508.8" y1="453.2" x2="508.1" y2="454.6" stroke="rgb(225,0,255)"/><line x1="508.1" y1="454.6" x2="507.4" y2="455.9" stroke="rgb(221,0,255)"/><line x1="507.4" y1="455.9" x2="506.6" y2="457.2" stroke="rgb(216,0,255)"/><line x1="506.6" y1="457.2" x2="505.9" y2="458.5" stroke="rgb(212,0,255)"/><line x1="505.9" y1="458.5" x2="505.2" y2="459.9" stroke="rgb(208,0,255)"/><line x1="505.2" y1="459.9" x2="504.5" y2="461.2" stroke="rgb(204,0,255)"/><line x1="504.5" y1="461.2" x2="503.7" y2="462.5" stroke="rgb(200,0,255)"/><line x1="503.7" y1="462.5" x2="503.0" y2="463.8" stroke="rgb(196,0,255)"/><line x1="503.0" y1="463.8" x2="502.3" y2="465.1" stroke="rgb(192,0,255)"/><line x1="502.3" y1="465.1" x2="501.6" y2="466.5" stroke="rgb(187,0,255)"/><line x1="501.6" y1="466.5" x2="500.9" y2="467.8" stroke="rgb(183,0,255)"/><line x1="500.9" y1="467.8" x2="500.1" y2="469.1" stroke="rgb(179,0,255)"/><line x1="500.1" y1="469.1" x2="499.4" y2="470.4" stroke="rgb(175,0,255)"/><line x1="499.4" y1="470.4" x2="498.7" y2="471.8" stroke="rgb(170,0,255)"/><line x1="498.7" y1="471.8" x2="498.0" y2="473.1" stroke="rgb(166,0,255)"/><line x1="498.0" y1="473.1" x2="497.3" y2="474.4" stroke="rgb(162,0,255)"/><line x1="497.3" y1="474.4" x2="496.6" y2="475.8" stroke="rgb(157,0,255)"/><line x1="496.6" y1="475.8" x2="495.9" y2="477.1" stroke="rgb(153,0,255)"/><line x1="495.9" y1="477.1" x2="495.2" y2="478.4" stroke="rgb(148,0,255)"/><line x1="495.2" y1="478.4" x2="494.5" y2="479.8" stroke="rgb(144,0,255)"/><line x1="494.5" y1="479.8" x2="493.8" y2="481.1" stroke="rgb(139,0,255)"/><line x1="493.8" y1="481.1" x2="493.2" y2="482.5" stroke="rgb(135,0,255)"/><line x1="493.2" y1="482.5" x2="492.5" y2="483.8" stroke="rgb(130,0,255)"/><line x1="492.5" y1="483.8" x2="491.8" y2="485.2" stroke="rgb(125,0,255)"/><line x1="491.8" y1="485.2" x2="491.1" y2="486.5" stroke="rgb(121,0,255)"/><line x1="491.1" y1="486.5" x2="490.5" y2="487.9" stroke="rgb(116,0,255)"/><line x1="490.5" y1="487.9" x2="489.8" y2="489.2" stroke="rgb(111,0,255)"/><line x1="489.8" y1="489.2" x2="489.2" y2="490.6" stroke="rgb(106,0,255)"/><line x1="489.2" y1="490.6" x2="488.5" y2="492.0" stroke="rgb(101,0,255)"/><line x1="488.5" y1="492.0" x2="487.9" y2="493.3" stroke="rgb(96,0,255)"/><line x1="487.9" y1="493.3" x2="487.3" y2="494.7" stroke="rgb(91,0,255)"/><line x1="487.3" y1="494.7" x2="486.7" y2="496.1" stroke="rgb(86,0,255)"/><line x1="486.7" y1="496.1" x2="486.2" y2="497.5" stroke="rgb(81,0,255)"/><line x1="486.2" y1="497.5" x2="485.6" y2="498.9" stroke="rgb(76,0,255)"/><line x1="485.6" y1="498.9" x2="485.0" y2="500.3" stroke="rgb(70,0,255)"/><line x1="485.0" y1="500.3" x2="484.4" y2="501.7" stroke="rgb(65,0,255)"/><line x1="484.4" y1="501.7" x2="483.8" y2="503.0" stroke="rgb(59,0,255)"/><line x1="483.8" y1="503.0" x2="483.2" y2="504.4" stroke="rgb(54,0,255)"/><line x1="483.2" y1="504.4" x2="482.7" y2="505.8" stroke="rgb(48,0,255)"/><line x1="482.7" y1="505.8" x2="482.1" y2="507.2" stroke="rgb(42,0,255)"/><line x1="482.1" y1="507.2" x2="481.6" y2="508.6" stroke="rgb(36,0,255)"/><line x1="481.6" y1="508.6" x2="481.1" y2="510.1" stroke="rgb(29,0,255)"/><line x1="481.1" y1="510.1" x2="480.5" y2="511.5" stroke="rgb(22,0,255)"/><line x1="480.5" y1="511.5" x2="480.0" y2="512.9" stroke="rgb(14,0,255)"/><line x1="480.0" y1="512.9" x2="479.5" y2="514.3" stroke="rgb(6,0,255)"/><line x1="479.5" y1="514.3" x2="478.2" y2="513.6" stroke="rgb(0,2,255)"/><line x1="478.2" y1="513.6" x2="476.8" y2="512.9" stroke="rgb(0,6,255)"/><line x1="476.8" y1="512.9" x2="475.5" y2="512.2" stroke="rgb(0,9,255)"/><line x1="475.5" y1="512.2" x2="474.1" y2="511.5" stroke="rgb(0,12,255)"/><line x1="474.1" y1="511.5" x2="472.8" y2="510.8" stroke="rgb(0,15,255)"/><line x1="472.8" y1="510.8" x2="471.5" y2="510.1" stroke="rgb(0,17,255)"/><line x1="471.5" y1="510.1" x2="470.1" y2="509.5" stroke="rgb(0,20,255)"/><line x1="470.1" y1="509.5" x2="468.8" y2="508.8" stroke="rgb(0,22,255)"/><line x1="468.8" y1="508.8" x2="467.5" y2="508.1" stroke="rgb(0,24,255)"/><line x1="467.5" y1="508.1" x2="466.1" y2="507.4" stroke="rgb(0,27,255)"/><line x1="466.1" y1="507.4" x2="464.8" y2="506.7" stroke="rgb(0,29,255)"/><line x1="464.8" y1="506.7" x2="463.4" y2="506.0" stroke="rgb(0,31,255)"/><line x1="463.4" y1="506.0" x2="462.1" y2="505.3" stroke="rgb(0,34,255)"/><line x1="462.1" y1="505.3" x2="460.8" y2="504.6" stroke="rgb(0,36,255)"/><line x1="460.8" y1="504.6" x2="459.4" y2="503.9" stroke="rgb(0,38,255)"/><line x1="459.4" y1="503.9" x2="458.1" y2="503.2" stroke="rgb(0,40,255)"/><line x1="458.1" y1="503.2" x2="456.7" y2="502.5" stroke="rgb(0,42,255)"/><line x1="456.7" y1="502.5" x2="455.4" y2="501.8" stroke="rgb(0,44,255)"/><line x1="455.4" y1="501.8" x2="454.1" y2="501.2" stroke="rgb(0,46,255)"/><line x1="454.1" y1="501.2" x2="452.7" y2="500.5" stroke="rgb(0,48,255)"/><line x1="452.7" y1="500.5" x2="451.4" y2="499.8" stroke="rgb(0,50,255)"/><line x1="451.4" y1="499.8" x2="450.1" y2="499.1" stroke="rgb(0,52,255)"/><line x1="450.1" y1="499.1" x2="448.7" y2="498.4" stroke="rgb(0,54,255)"/><line x1="448.7" y1="498.4" x2="447.4" y2="497.6" stroke="rgb(0,56,255)"/><line x1="447.4" y1="497.6" x2="446.1" y2="496.9" stroke="rgb(0,58,255)"/><line x1="446.1" y1="496.9" x2="444.8" y2="496.1" stroke="rgb(0,60,255)"/><line x1="444.8" y1="496.1" x2="443.6" y2="495.3" stroke="rgb(0,62,255)"/><line x1="443.6" y1="495.3" x2="442.3" y2="494.5" stroke="rgb(0,63,255)"/><line x1="442.3" y1="494.5" x2="441.0" y2="493.7" stroke="rgb(0,65,255)"/><line x1="441.0" y1="493.7" x2="439.8" y2="492.8" stroke="rgb(0,67,255)"/><line x1="439.8" y1="492.8" x2="438.5" y2="492.0" stroke="rgb(0,69,255)"/><line x1="438.5" y1="492.0" x2="437.2" y2="491.2" stroke="rgb(0,71,255)"/><line x1="437.2" y1="491.2" x2="436.0" y2="490.4" stroke="rgb(0,73,255)"/><line x1="436.0" y1="490.4" x2="434.7" y2="489.6" stroke="rgb(0,74,255)"/><line x1="434.7" y1="489.6" x2="433.4" y2="488.7" stroke="rgb(0,76,255)"/><line x1="433.4" y1="488.7" x2="432.2" y2="487.9" stroke="rgb(0,78,255)"/><line x1="432.2" y1="487.9" x2="430.9" y2="487.1" stroke="rgb(0,80,255)"/><line x1="430.9" y1="487.1" x2="429.6" y2="486.3" stroke="rgb(0,81,255)"/><line x1="429.6" y1="486.3" x2="428.4" y2="485.5" stroke="rgb(0,83,255)"/><line x1="428.4" y1="485.5" x2="427.1" y2="484.6" stroke="rgb(0,85,255)"/><line x1="427.1" y1="484.6" x2="425.9" y2="483.8" stroke="rgb(0,87,255)"/><line x1="425.9" y1="483.8" x2="424.6" y2="483.0" stroke="rgb(0,88,255)"/><line x1="424.6" y1="483.0" x2="423.3" y2="482.2" stroke="rgb(0,90,255)"/><line x1="423.3" y1="482.2" x2="422.1" y2="481.4" stroke="rgb(0,92,255)"/><line x1="422.1" y1="481.4" x2="420.8" y2="480.5" stroke="rgb(0,93,255)"/><line x1="420.8" y1="480.5" x2="419.5" y2="479.7" stroke="rgb(0,95,255)"/><line x1="419.5" y1="479.7" x2="418.3" y2="478.9" stroke="rgb(0,97,255)"/><line x1="418.3" y1="478.9" x2="417.0" y2="478.1" stroke="rgb(0,98,255)"/><line x1="417.0" y1="478.1" x2="415.7" y2="477.2" stroke="rgb(0,100,255)"/><line x1="415.7" y1="477.2" x2="414.5" y2="476.4" stroke="rgb(0,102,255)"/><line x1="414.5" y1="476.4" x2="413.2" y2="475.6" stroke="rgb(0,103,255)"/><line x1="413.2" y1="475.6" x2="412.0" y2="474.7" stroke="rgb(0,105,255)"/><line x1="412.0" y1="474.7" x2="410.7" y2="473.9" stroke="rgb(0,107,255)"/><line x1="410.7" y1="473.9" x2="409.5" y2="473.1" stroke="rgb(0,108,255)"/><line x1="409.5" y1="473.1" x2="408.2" y2="472.2" stroke="rgb(0,110,255)"/><line x1="408.2" y1="472.2" x2="407.0" y2="471.4" stroke="rgb(0,112,255)"/><line x1="407.0" y1="471.4" x2="405.7" y2="470.5" stroke="rgb(0,113,255)"/><line x1="405.7" y1="470.5" x2="404.5" y2="469.7" stroke="rgb(0,115,255)"/><line x1="404.5" y1="469.7" x2="403.2" y2="468.9" stroke="rgb(0,116,255)"/><line x1="403.2" y1="468.9" x2="402.0" y2="468.0" stroke="rgb(0,118,255)"/><line x1="402.0" y1="468.0" x2="400.7" y2="467.2" stroke="rgb(0,120,255)"/><line x1="400.7" y1="467.2" x2="399.5" y2="466.4" stroke="rgb(0,121,255)"/><line x1="399.5" y1="466.4" x2="398.2" y2="465.5" stroke="rgb(0,123,255)"/><line x1="398.2" y1="465.5" x2="397.0" y2="464.7" stroke="rgb(0,124,255)"/><line x1="397.0" y1="464.7" x2="395.7" y2="463.8" stroke="rgb(0,126,255)"/><line x1="395.7" y1="463.8" x2="394.5" y2="463.0" stroke="rgb(0,128,255)"/><line x1="394.5" y1="463.0" x2="393.2" y2="462.2" stroke="rgb(0,129,255)"/><line x1="393.2" y1="462.2" x2="392.0" y2="461.3" stroke="rgb(0,131,255)"/><line x1="392.0" y1="461.3" x2="390.7" y2="460.5" stroke="rgb(0,132,255)"/><line x1="390.7" y1="460.5" x2="389.4" y2="459.6" stroke="rgb(0,134,255)"/><line x1="389.4" y1="459.6" x2="388.2" y2="458.8" stroke="rgb(0,135,255)"/><line x1="388.2" y1="458.8" x2="386.9" y2="458.0" stroke="rgb(0,137,255)"/><line x1="386.9" y1="458.0" x2="385.7" y2="457.1" stroke="rgb(0,138,255)"/><line x1="385.7" y1="457.1" x2="384.5" y2="456.3" stroke="rgb(0,140,255)"/><line x1="384.5" y1="456.3" x2="383.2" y2="455.4" stroke="rgb(0,141,255)"/><line x1="383.2" y1="455.4" x2="382.0" y2="454.5" stroke="rgb(0,143,255)"/><line x1="382.0" y1="454.5" x2="380.8" y2="453.6" stroke="rgb(0,144,255)"/><line x1="380.8" y1="453.6" x2="379.6" y2="452.8" stroke="rgb(0,146,255)"/><line x1="379.6" y1="452.8" x2="378.3" y2="451.9" stroke="rgb(0,147,255)"/><line x1="378.3" y1="451.9" x2="377.1" y2="451.0" stroke="rgb(0,149,255)"/><line x1="377.1" y1="451.0" x2="375.9" y2="450.1" stroke="rgb(0,150,255)"/><line x1="375.9" y1="450.1" x2="374.7" y2="449.2" stroke="rgb(0,152,255)"/><line x1="374.7" y1="449.2" x2="373.4" y2="448.4" stroke="rgb(0,153,255)"/><line x1="373.4" y1="448.4" x2="372.2" y2="447.5" stroke="rgb(0,155,255)"/><line x1="372.2" y1="447.5" x2="371.0" y2="446.6" stroke="rgb(0,156,255)"/><line x1="371.0" y1="446.6" x2="369.8" y2="445.7" stroke="rgb(0,158,255)"/><line x1="369.8" y1="445.7" x2="368.6" y2="444.8" stroke="rgb(0,159,255)"/><line x1="368.6" y1="444.8" x2="367.3" y2="444.0" stroke="rgb(0,161,255)"/><line x1="367.3" y1="444.0" x2="366.1" y2="443.1" stroke="rgb(0,162,255)"/><line x1="366.1" y1="443.1" x2="364.9" y2="442.2" stroke="rgb(0,164,255)"/><line x1="364.9" y1="442.2" x2="363.7" y2="441.3" stroke="rgb(0,165,255)"/><line x1="363.7" y1="441.3" x2="362.4" y2="440.4" stroke="rgb(0,167,255)"/><line x1="362.4" y1="440.4" x2="361.2" y2="439.6" stroke="rgb(0,168,255)"/><line x1="361.2" y1="439.6" x2="360.0" y2="438.7" stroke="rgb(0,170,255)"/><line x1="360.0" y1="438.7" x2="358.8" y2="437.8" stroke="rgb(0,171,255)"/><line x1="358.8" y1="437.8" x2="357.6" y2="436.9" stroke="rgb(0,173,255)"/><line x1="357.6" y1="436.9" x2="356.4" y2="436.0" stroke="rgb(0,174,255)"/><line x1="356.4" y1="436.0" x2="355.2" y2="435.0" stroke="rgb(0,175,255)"/><line x1="355.2" y1="435.0" x2="354.0" y2="434.1" stroke="rgb(0,177,255)"/><line x1="354.0" y1="434.1" x2="352.8" y2="433.2" stroke="rgb(0,178,255)"/><line x1="352.8" y1="433.2" x2="351.7" y2="432.2" stroke="rgb(0,180,255)"/><line x1="351.7" y1="432.2" x2="350.5" y2="431.3" stroke="rgb(0,181,255)"/><line x1="350.5" y1="431.3" x2="349.3" y2="430.3" stroke="rgb(0,183,255)"/><line x1="349.3" y1="430.3" x2="348.1" y2="429.4" stroke="rgb(0,184,255)"/><line x1="348.1" y1="429.4" x2="347.0" y2="428.4" stroke="rgb(0,186,255)"/><line x1="347.0" y1="428.4" x2="345.8" y2="427.5" stroke="rgb(0,187,255)"/><line x1="345.8" y1="427.5" x2="344.6" y2="426.5" stroke="rgb(0,188,255)"/><line x1="344.6" y1="426.5" x2="343.4" y2="425.6" stroke="rgb(0,190,255)"/><line x1="343.4" y1="425.6" x2="342.3" y2="424.7" stroke="rgb(0,191,255)"/><line x1="342.3" y1="424.7" x2="341.1" y2="423.7" stroke="rgb(0,193,255)"/><line x1="341.1" y1="423.7" x2="339.9" y2="422.8" stroke="rgb(0,194,255)"/><line x1="339.9" y1="422.8" x2="338.8" y2="421.8" stroke="rgb(0,195,255)"/><line x1="338.8" y1="421.8" x2="337.6" y2="420.9" stroke="rgb(0,197,255)"/><line x1="337.6" y1="420.9" x2="336.4" y2="419.9" stroke="rgb(0,198,255)"/><line x1="336.4" y1="419.9" x2="335.3" y2="418.9" stroke="rgb(0,200,255)"/><line x1="335.3" y1="418.9" x2="334.1" y2="417.9" stroke="rgb(0,201,255)"/><line x1="334.1" y1="417.9" x2="333.0" y2="416.9" stroke="rgb(0,202,255)"/><line x1="333.0" y1="416.9" x2="331.9" y2="415.9" stroke="rgb(0,204,255)"/><line x1="331.9" y1="415.9" x2="330.8" y2="414.9" stroke="rgb(0,205,255)"/><line x1="330.8" y1="414.9" x2="329.7" y2="413.8" stroke="rgb(0,207,255)"/><line x1="329.7" y1="413.8" x2="328.6" y2="412.8" stroke="rgb(0,208,255)"/><line x1="328.6" y1="412.8" x2="327.5" y2="411.8" stroke="rgb(0,209,255)"/><line x1="327.5" y1="411.8" x2="326.4" y2="410.7" stroke="rgb(0,211,255)"/><line x1="326.4" y1="410.7" x2="325.3" y2="409.7" stroke="rgb(0,212,255)"/><line x1="325.3" y1="409.7" x2="324.3" y2="408.7" stroke="rgb(0,213,255)"/><line x1="324.3" y1="408.7" x2="323.2" y2="407.6" stroke="rgb(0,215,255)"/><line x1="323.2" y1="407.6" x2="322.1" y2="406.6" stroke="rgb(0,216,255)"/><line x1="322.1" y1="406.6" x2="321.0" y2="405.6" stroke="rgb(0,218,255)"/><line x1="321.0" y1="405.6" x2="319.9" y2="404.5" stroke="rgb(0,219,255)"/><line x1="319.9" y1="404.5" x2="318.8" y2="403.5" stroke="rgb(0,220,255)"/><line x1="318.8" y1="403.5" x2="317.7" y2="402.5" stroke="rgb(0,222,255)"/><line x1="317.7" y1="402.5" x2="316.6" y2="401.4" stroke="rgb(0,223,255)"/><line x1="316.6" y1="401.4" x2="315.5" y2="400.4" stroke="rgb(0,224,255)"/><line x1="315.5" y1="400.4" x2="314.4" y2="399.3" stroke="rgb(0,226,255)"/><line x1="314.4" y1="399.3" x2="313.3" y2="398.3" stroke="rgb(0,227,255)"/><line x1="313.3" y1="398.3" x2="312.2" y2="397.2" stroke="rgb(0,228,255)"/><line x1="312.2" y1="397.2" x2="311.2" y2="396.2" stroke="rgb(0,230,255)"/><line x1="311.2" y1="396.2" x2="310.1" y2="395.1" stroke="rgb(0,231,255)"/><line x1="310.1" y1="395.1" x2="309.0" y2="394.0" stroke="rgb(0,233,255)"/><line x1="309.0" y1="394.0" x2="308.0" y2="393.0" stroke="rgb(0,234,255)"/><line x1="308.0" y1="393.0" x2="306.9" y2="391.9" stroke="rgb(0,235,255)"/><line x1="306.9" y1="391.9" x2="305.9" y2="390.9" stroke="rgb(0,237,255)"/><line x1="305.9" y1="390.9" x2="304.8" y2="389.8" stroke="rgb(0,238,255)"/><line x1="304.8" y1="389.8" x2="303.7" y2="388.7" stroke="rgb(0,239,255)"/><line x1="303.7" y1="388.7" x2="302.7" y2="387.7" stroke="rgb(0,241,255)"/><line x1="302.7" y1="387.7" x2="301.6" y2="386.6" stroke="rgb(0,242,255)"/><line x1="301.6" y1="386.6" x2="300.5" y2="385.5" stroke="rgb(0,243,255)"/><line x1="300.5" y1="385.5" x2="299.5" y2="384.5" stroke="rgb(0,245,255)"/><line x1="299.5" y1="384.5" x2="298.4" y2="383.4" stroke="rgb(0,246,255)"/><line x1="298.4" y1="383.4" x2="297.3" y2="382.3" stroke="rgb(0,247,255)"/><line x1="297.3" y1="382.3" x2="296.3" y2="381.3" stroke="rgb(0,249,255)"/><line x1="296.3" y1="381.3" x2="295.2" y2="380.2" stroke="rgb(0,250,255)"/><line x1="295.2" y1="380.2" x2="294.1" y2="379.1" stroke="rgb(0,251,255)"/><line x1="294.1" y1="379.1" x2="293.1" y2="378.1" stroke="rgb(0,253,255)"/><line x1="293.1" y1="378.1" x2="292.0" y2="377.0" stroke="rgb(0,254,255)"/><line x1="292.0" y1="377.0" x2="291.4" y2="375.6" stroke="rgb(0,255,254)"/><line x1="291.4" y1="375.6" x2="290.9" y2="374.2" stroke="rgb(0,255,252)"/><line x1="290.9" y1="374.2" x2="290.3" y2="372.8" stroke="rgb(0,255,250)"/><line x1="290.3" y1="372.8" x2="289.8" y2="371.4" stroke="rgb(0,255,249)"/><line x1="289.8" y1="371.4" x2="289.2" y2="370.0" stroke="rgb(0,255,247)"/><line x1="289.2" y1="370.0" x2="288.7" y2="368.6" stroke="rgb(0,255,245)"/><line x1="288.7" y1="368.6" x2="288.1" y2="367.2" stroke="rgb(0,255,243)"/><line x1="288.1" y1="367.2" x2="287.6" y2="365.8" stroke="rgb(0,255,242)"/><line x1="287.6" y1="365.8" x2="287.0" y2="364.4" stroke="rgb(0,255,240)"/><line x1="287.0" y1="364.4" x2="286.4" y2="363.0" stroke="rgb(0,255,238)"/><line x1="286.4" y1="363.0" x2="285.8" y2="361.6" stroke="rgb(0,255,236)"/><line x1="285.8" y1="361.6" x2="285.1" y2="360.3" stroke="rgb(0,255,235)"/><line x1="285.1" y1="360.3" x2="284.5" y2="358.9" stroke="rgb(0,255,233)"/><line x1="284.5" y1="358.9" x2="283.9" y2="357.5" stroke="rgb(0,255,231)"/><line x1="283.9" y1="357.5" x2="283.2" y2="356.2" stroke="rgb(0,255,230)"/><line x1="283.2" y1="356.2" x2="282.6" y2="354.8" stroke="rgb(0,255,228)"/><line x1="282.6" y1="354.8" x2="281.9" y2="353.4" stroke="rgb(0,255,226)"/><line x1="281.9" y1="353.4" x2="281.3" y2="352.1" stroke="rgb(0,255,224)"/><line x1="281.3" y1="352.1" x2="280.6" y2="350.7" stroke="rgb(0,255,223)"/><line x1="280.6" y1="350.7" x2="280.0" y2="349.3" stroke="rgb(0,255,221)"/><line x1="280.0" y1="349.3" x2="279.4" y2="348.0" stroke="rgb(0,255,219)"/><line x1="279.4" y1="348.0" x2="278.7" y2="346.6" stroke="rgb(0,255,217)"/><line x1="278.7" y1="346.6" x2="278.1" y2="345.2" stroke="rgb(0,255,215)"/><line x1="278.1" y1="345.2" x2="277.4" y2="343.9" stroke="rgb(0,255,214)"/><line x1="277.4" y1="343.9" x2="276.8" y2="342.5" stroke="rgb(0,255,212)"/><line x1="276.8" y1="342.5" x2="276.2" y2="341.1" stroke="rgb(0,255,210)"/><line x1="276.2" y1="341.1" x2="275.5" y2="339.8" stroke="rgb(0,255,208)"/><line x1="275.5" y1="339.8" x2="274.9" y2="338.4" stroke="rgb(0,255,207)"/><line x1="274.9" y1="338.4" x2="274.3" y2="337.0" stroke="rgb(0,255,205)"/><line x1="274.3" y1="337.0" x2="273.6" y2="335.7" stroke="rgb(0,255,203)"/><line x1="273.6" y1="335.7" x2="273.0" y2="334.3" stroke="rgb(0,255,201)"/><line x1="273.0" y1="334.3" x2="272.4" y2="332.9" stroke="rgb(0,255,199)"/><line x1="272.4" y1="332.9" x2="271.7" y2="331.6" stroke="rgb(0,255,198)"/><line x1="271.7" y1="331.6" x2="271.1" y2="330.2" stroke="rgb(0,255,196)"/><line x1="271.1" y1="330.2" x2="270.5" y2="328.8" stroke="rgb(0,255,194)"/><line x1="270.5" y1="328.8" x2="269.9" y2="327.4" stroke="rgb(0,255,192)"/><line x1="269.9" y1="327.4" x2="269.3" y2="326.1" stroke="rgb(0,255,190)"/><line x1="269.3" y1="326.1" x2="268.7" y2="324.7" stroke="rgb(0,255,188)"/><line x1="268.7" y1="324.7" x2="268.1" y2="323.3" stroke="rgb(0,255,187)"/><line x1="268.1" y1="323.3" x2="267.6" y2="321.9" stroke="rgb(0,255,185)"/><line x1="267.6" y1="321.9" x2="267.0" y2="320.5" stroke="rgb(0,255,183)"/><line x1="267.0" y1="320.5" x2="266.4" y2="319.1" stroke="rgb(0,255,181)"/><line x1="266.4" y1="319.1" x2="265.9" y2="317.7" stroke="rgb(0,255,179)"/><line x1="265.9" y1="317.7" x2="265.3" y2="316.3" stroke="rgb(0,255,177)"/><line x1="265.3" y1="316.3" x2="264.7" y2="314.9" stroke="rgb(0,255,176)"/><line x1="264.7" y1="314.9" x2="264.2" y2="313.5" stroke="rgb(0,255,174)"/><line x1="264.2" y1="313.5" x2="263.6" y2="312.1" stroke="rgb(0,255,172)"/><line x1="263.6" y1="312.1" x2="263.1" y2="310.7" stroke="rgb(0,255,170)"/><line x1="263.1" y1="310.7" x2="262.5" y2="309.3" stroke="rgb(0,255,168)"/><line x1="262.5" y1="309.3" x2="261.9" y2="307.9" stroke="rgb(0,255,166)"/><line x1="261.9" y1="307.9" x2="261.4" y2="306.5" stroke="rgb(0,255,164)"/><line x1="261.4" y1="306.5" x2="260.8" y2="305.1" stroke="rgb(0,255,162)"/><line x1="260.8" y1="305.1" x2="260.3" y2="303.7" stroke="rgb(0,255,160)"/><line x1="260.3" y1="303.7" x2="259.7" y2="302.3" stroke="rgb(0,255,159)"/><line x1="259.7" y1="302.3" x2="259.1" y2="300.9" stroke="rgb(0,255,157)"/><line x1="259.1" y1="300.9" x2="258.6" y2="299.5" stroke="rgb(0,255,155)"/><line x1="258.6" y1="299.5" x2="258.0" y2="298.1" stroke="rgb(0,255,153)"/><line x1="258.0" y1="298.1" x2="257.5" y2="296.7" stroke="rgb(0,255,151)"/><line x1="257.5" y1="296.7" x2="256.9" y2="295.3" stroke="rgb(0,255,149)"/><line x1="256.9" y1="295.3" x2="256.3" y2="293.9" stroke="rgb(0,255,147)"/><line x1="256.3" y1="293.9" x2="255.8" y2="292.5" stroke="rgb(0,255,145)"/><line x1="255.8" y1="292.5" x2="255.3" y2="291.1" stroke="rgb(0,255,143)"/><line x1="255.3" y1="291.1" x2="254.7" y2="289.6" stroke="rgb(0,255,141)"/><line x1="254.7" y1="289.6" x2="254.3" y2="288.2" stroke="rgb(0,255,139)"/><line x1="254.3" y1="288.2" x2="253.8" y2="286.8" stroke="rgb(0,255,137)"/><line x1="253.8" y1="286.8" x2="253.3" y2="285.3" stroke="rgb(0,255,135)"/><line x1="253.3" y1="285.3" x2="252.9" y2="283.9" stroke="rgb(0,255,133)"/><line x1="252.9" y1="283.9" x2="252.5" y2="282.5" stroke="rgb(0,255,131)"/><line x1="252.5" y1="282.5" x2="252.0" y2="281.0" stroke="rgb(0,255,129)"/><line x1="252.0" y1="281.0" x2="251.6" y2="279.6" stroke="rgb(0,255,127)"/><line x1="251.6" y1="279.6" x2="251.1" y2="278.1" stroke="rgb(0,255,125)"/><line x1="251.1" y1="278.1" x2="250.7" y2="276.7" stroke="rgb(0,255,123)"/><line x1="250.7" y1="276.7" x2="250.3" y2="275.2" stroke="rgb(0,255,121)"/><line x1="250.3" y1="275.2" x2="249.8" y2="273.8" stroke="rgb(0,255,119)"/><line x1="249.8" y1="273.8" x2="249.4" y2="272.4" stroke="rgb(0,255,117)"/><line x1="249.4" y1="272.4" x2="249.0" y2="270.9" stroke="rgb(0,255,115)"/><line x1="249.0" y1="270.9" x2="248.5" y2="269.5" stroke="rgb(0,255,113)"/><line x1="248.5" y1="269.5" x2="248.1" y2="268.0" stroke="rgb(0,255,111)"/><line x1="248.1" y1="268.0" x2="247.7" y2="266.6" stroke="rgb(0,255,109)"/><line x1="247.7" y1="266.6" x2="247.3" y2="265.1" stroke="rgb(0,255,106)"/><line x1="247.3" y1="265.1" x2="246.9" y2="263.6" stroke="rgb(0,255,104)"/><line x1="246.9" y1="263.6" x2="246.5" y2="262.2" stroke="rgb(0,255,102)"/><line x1="246.5" y1="262.2" x2="246.2" y2="260.7" stroke="rgb(0,255,100)"/><line x1="246.2" y1="260.7" x2="245.8" y2="259.3" stroke="rgb(0,255,98)"/><line x1="245.8" y1="259.3" x2="245.4" y2="257.8" stroke="rgb(0,255,96)"/><line x1="245.4" y1="257.8" x2="245.0" y2="256.4" stroke="rgb(0,255,94)"/><line x1="245.0" y1="256.4" x2="244.6" y2="254.9" stroke="rgb(0,255,91)"/><line x1="244.6" y1="254.9" x2="244.2" y2="253.4" stroke="rgb(0,255,89)"/><line x1="244.2" y1="253.4" x2="243.8" y2="252.0" stroke="rgb(0,255,87)"/><line x1="243.8" y1="252.0" x2="243.5" y2="250.5" stroke="rgb(0,255,85)"/><line x1="243.5" y1="250.5" x2="243.1" y2="249.1" stroke="rgb(0,255,82)"/><line x1="243.1" y1="249.1" x2="242.7" y2="247.6" stroke="rgb(0,255,80)"/><line x1="242.7" y1="247.6" x2="242.4" y2="246.1" stroke="rgb(0,255,78)"/><line x1="242.4" y1="246.1" x2="242.1" y2="244.7" stroke="rgb(0,255,76)"/><line x1="242.1" y1="244.7" x2="241.7" y2="243.2" stroke="rgb(0,255,73)"/><line x1="241.7" y1="243.2" x2="241.4" y2="241.7" stroke="rgb(0,255,71)"/><line x1="241.4" y1="241.7" x2="241.0" y2="240.3" stroke="rgb(0,255,69)"/><line x1="241.0" y1="240.3" x2="240.7" y2="238.8" stroke="rgb(0,255,66)"/><line x1="240.7" y1="238.8" x2="240.3" y2="237.3" stroke="rgb(0,255,64)"/><line x1="240.3" y1="237.3" x2="240.0" y2="235.8" stroke="rgb(0,255,62)"/><line x1="240.0" y1="235.8" x2="239.7" y2="234.4" stroke="rgb(0,255,59)"/><line x1="239.7" y1="234.4" x2="239.4" y2="232.9" stroke="rgb(0,255,57)"/><line x1="239.4" y1="232.9" x2="239.2" y2="231.4" stroke="rgb(0,255,54)"/><line x1="239.2" y1="231.4" x2="239.0" y2="229.9" stroke="rgb(0,255,52)"/><line x1="239.0" y1="229.9" x2="238.8" y2="228.4" stroke="rgb(0,255,49)"/><line x1="238.8" y1="228.4" x2="238.6" y2="226.9" stroke="rgb(0,255,47)"/><line x1="238.6" y1="226.9" x2="238.4" y2="225.4" stroke="rgb(0,255,44)"/><line x1="238.4" y1="225.4" x2="238.2" y2="223.9" stroke="rgb(0,255,41)"/><line x1="238.2" y1="223.9" x2="238.0" y2="222.4" stroke="rgb(0,255,39)"/><line x1="238.0" y1="222.4" x2="237.8" y2="220.9" stroke="rgb(0,255,36)"/><line x1="237.8" y1="220.9" x2="237.6" y2="219.4" stroke="rgb(0,255,33)"/><line x1="237.6" y1="219.4" x2="237.4" y2="217.9" stroke="rgb(0,255,30)"/><line x1="237.4" y1="217.9" x2="237.2" y2="216.5" stroke="rgb(0,255,27)"/><line x1="237.2" y1="216.5" x2="237.0" y2="215.0" stroke="rgb(0,255,24)"/><line x1="237.0" y1="215.0" x2="236.8" y2="213.5" stroke="rgb(0,255,21)"/><line x1="236.8" y1="213.5" x2="236.5" y2="212.0" stroke="rgb(0,255,18)"/><line x1="236.5" y1="212.0" x2="236.3" y2="210.5" stroke="rgb(0,255,15)"/><line x1="236.3" y1="210.5" x2="236.1" y2="209.0" stroke="rgb(0,255,11)"/><line x1="236.1" y1="209.0" x2="235.9" y2="207.5" stroke="rgb(0,255,7)"/><line x1="235.9" y1="207.5" x2="235.7" y2="206.0" stroke="rgb(0,255,3)"/></g>
<path d="M262.0,210.7 L263.5,210.5 L265.0,210.3 L266.5,210.1 L268.0,209.9 L269.5,209.7 L271.0,209.4 L272.5,209.2 L274.0,209.0 L275.5,208.7 L277.0,208.5 L278.5,208.2 L280.0,208.0 L281.5,207.8 L283.0,207.5 L284.5,207.3 L286.0,207.0 L287.5,206.8 L289.0,206.6 L290.5,206.3 L292.0,206.1 L293.5,205.8 L295.0,205.6 L296.5,205.3 L297.9,205.0 L299.4,204.8 L300.9,204.5 L302.4,204.2 L303.9,203.9 L305.4,203.7 L306.9,203.4 L308.4,203.1 L309.9,202.8 L311.4,202.6 L312.9,202.3 L314.3,202.0 L315.8,201.7 L317.3,201.4 L318.8,201.2 L320.3,200.9 L321.8,200.6 L323.3,200.3 L324.8,200.0 L326.3,199.8 L327.8,199.5 L329.2,199.2 L330.7,198.9 L332.2,198.6 L333.7,198.3 L335.2,198.0 M335.2,198.0 L336.6,198.5 L338.1,199.0 L339.5,199.5 L340.9,200.0 L342.4,200.5 L343.8,201.0 L345.2,201.4 L346.7,201.9 L348.1,202.4 L349.6,202.9 L351.0,203.3 L352.5,203.8 L353.9,204.2 L355.3,204.7 L356.8,205.1 L358.2,205.6 L359.7,206.0 L361.1,206.5 L362.6,206.9 L364.0,207.4 L365.5,207.8 L366.9,208.2 L368.4,208.6 L369.9,209.0 L371.3,209.4 L372.8,209.7 L374.3,210.1 L375.7,210.5 L377.2,210.8 L378.7,211.2 L380.2,211.6 L381.6,211.9 L383.1,212.3 L384.6,212.7 L386.0,213.0 L387.5,213.4 L389.0,213.8 L390.5,214.1 L391.9,214.5 L393.4,214.9 L394.9,215.2 L396.3,215.6 L397.8,216.0 L399.3,216.3 L400.8,216.7 L402.2,217.0 L403.7,217.4 L405.2,217.8 L406.6,218.1 L408.1,218.5 L409.6,218.9 L411.1,219.2 L412.5,219.6 L414.0,220.0 L415.5,220.3 L417.0,220.6 L418.4,221.0 L419.9,221.3 L421.4,221.6 L422.9,221.9 L424.4,222.2 L425.9,222.4 L427.4,222.7 L428.8,223.0 L430.3,223.3 L431.8,223.6 L433.3,223.9 L434.8,224.1 L436.3,224.4 L437.8,224.7 L439.3,225.0 L440.8,225.3 L442.2,225.5 L443.7,225.8 L445.2,226.1 L446.7,226.4 L448.2,226.6 L449.7,226.8 L451.2,227.1 L452.7,227.3 L454.2,227.5 L455.7,227.8 L457.2,228.0 L458.7,228.2 L460.2,228.4 L461.7,228.7 L463.2,228.9 L464.7,229.1 M489.0,232.3 L489.1,233.8 L489.2,235.3 L489.2,236.8 L489.3,238.3 L489.4,239.8 L489.5,241.3 L489.6,242.8 L489.7,244.3 L489.7,245.8 L489.8,247.3 L489.9,248.8 L490.0,250.3 L490.1,251.9 L490.1,253.4 L490.2,254.9 L490.3,256.4 L490.4,257.9 L490.5,259.4 L490.5,260.9 L490.6,262.4 L490.7,263.9 L490.8,265.4 L490.9,266.9 L490.9,268.4 L491.0,269.9 L491.1,271.4 L491.2,272.9 L491.3,274.4 L491.4,275.9 L491.4,277.4 L491.5,278.9 L491.6,280.4 L491.7,281.9 L491.8,283.4 L491.8,284.9 L491.9,286.4 L492.0,287.9 L492.1,289.4 L492.3,291.0 L492.4,292.5 L492.5,294.0 L492.6,295.5 L492.8,297.0 L492.9,298.5 L493.0,300.0 L493.2,301.5 L493.3,303.0 L493.4,304.5 L493.6,306.0 L493.7,307.5 L493.8,309.0 L493.9,310.5 L494.1,312.0 L494.2,313.5 L494.3,315.0 L494.5,316.5 L494.6,318.0 L494.8,319.5 L494.9,321.0 L495.1,322.5 L495.2,324.0 L495.4,325.4 L495.6,326.9 L495.7,328.4 L495.9,329.9 L496.1,331.4 L496.2,332.9 L496.4,334.4 L496.6,335.9 L496.7,337.4 L496.9,338.9 L497.1,340.4 L497.2,341.9 L497.4,343.4 L497.6,344.9 L497.8,346.4 L498.0,347.9 L498.2,349.4 L498.4,350.9 L498.5,352.4 L498.7,353.9 L498.9,355.4 L499.1,356.9 L499.3,358.4 L499.5,359.9 L499.7,361.3 L499.9,362.8 L500.0,364.3 L500.2,365.8 L500.5,367.3 L500.7,368.8 L500.9,370.3 L501.1,371.8 L501.4,373.3 L501.6,374.8 L501.9,376.2 L502.1,377.7 L502.4,379.2 L502.6,380.7 L502.9,382.2 L503.1,383.7 L503.4,385.2 L503.6,386.6 L503.9,388.1 L504.1,389.6 L504.3,391.1 L504.6,392.6 L504.8,394.1 L505.1,395.6 L505.3,397.0 L505.6,398.5 L505.8,400.0 L506.1,401.5 L506.3,403.0 L506.6,404.5 L506.8,406.0 L507.1,407.4 L507.3,408.9 L507.6,410.4 L507.8,411.9 L508.1,413.4 L508.3,414.9 L508.6,416.4 L508.8,417.8 L509.1,419.3 L509.3,420.8 L509.6,422.3 L509.8,423.8 L510.1,425.3 L510.4,426.7 L510.7,428.2 L511.0,429.7 L511.4,431.1 L511.8,432.6 L512.2,434.0 L512.6,435.5 L513.0,436.9 L513.4,438.4 L513.8,439.8 L514.2,441.3 L514.6,442.7 L515.0,444.2 M484.3,513.2 L482.9,512.5 L481.6,511.9 L480.3,511.2 L478.9,510.5 L477.6,509.8 L476.3,509.0 L475.0,508.3 L473.6,507.6 L472.3,506.8 L471.0,506.1 L469.7,505.4 L468.4,504.6 L467.1,503.9 L465.8,503.1 L464.4,502.4 L463.1,501.7 L461.8,500.9 L460.5,500.2 L459.2,499.5 L457.9,498.7 L456.5,498.0 L455.2,497.3 L453.9,496.5 L452.6,495.8 L451.3,495.0 L450.0,494.2 L448.7,493.5 L447.4,492.7 L446.2,491.9 L444.9,491.1 L443.6,490.3 L442.3,489.4 L441.1,488.6 L439.8,487.8 L438.5,487.0 L437.3,486.2 L436.0,485.4 L434.7,484.6 L433.4,483.8 L432.2,483.0 L430.9,482.2 L429.6,481.4 L428.3,480.6 L427.1,479.7 L425.8,478.9 L424.5,478.1 L423.3,477.3 L422.0,476.5 L420.7,475.7 L419.4,474.9 L418.2,474.1 L416.9,473.3 L415.6,472.4 L414.4,471.6 L413.1,470.8 L411.9,469.9 L410.6,469.1 L409.4,468.2 L408.1,467.4 L406.9,466.5 L405.7,465.7 L404.4,464.8 L403.2,464.0 L401.9,463.1 L400.7,462.3 L399.4,461.4 L398.2,460.6 L396.9,459.7 L395.7,458.9 L394.4,458.0 L393.2,457.2 L392.0,456.3 L390.7,455.5 L389.5,454.6 L388.2,453.8 L387.0,452.9 L385.7,452.1 L384.5,451.2 L383.2,450.4 L382.0,449.5 L380.8,448.7 L379.6,447.8 L378.4,446.9 L377.2,445.9 L376.0,445.0 L374.8,444.1 L373.6,443.1 L372.5,442.2 L371.3,441.2 L370.1,440.3 L368.9,439.3 L367.8,438.4 L366.6,437.4 L365.4,436.5 L364.3,435.5 L363.1,434.6 L361.9,433.7 L360.7,432.7 L359.6,431.8 L358.4,430.8 L357.2,429.9 L356.0,428.9 L354.9,428.0 L353.7,427.0 L352.5,426.1 L351.4,425.1 L350.2,424.2 L349.0,423.2 L347.8,422.3 L346.7,421.3 L345.5,420.4 L344.3,419.4 L343.2,418.4 L342.0,417.5 L340.9,416.5 L339.7,415.5 L338.6,414.5 L337.4,413.6 L336.3,412.6 L335.2,411.6 L334.0,410.6 L332.9,409.6 L331.7,408.7 L330.6,407.7 L329.4,406.7 L328.3,405.7 L327.1,404.8 L326.0,403.8 L324.8,402.8 L323.7,401.8 L322.5,400.8 L321.4,399.9 L320.3,398.9 L319.1,397.9 L318.0,396.9 L316.8,395.9 L315.7,394.9 L314.6,393.9 L313.5,392.8 L312.5,391.8 L311.4,390.7 L310.3,389.6 L309.3,388.6 L308.2,387.5 L307.2,386.4 L306.1,385.3 L305.1,384.3 L304.0,383.2 L302.9,382.1 L301.9,381.0 L300.8,380.0 L299.8,378.9 L298.7,377.8 L297.7,376.7 L296.6,375.7 L295.6,374.6 L294.5,373.5 M294.5,373.5 L293.8,372.2 L293.1,370.8 L292.4,369.5 L291.7,368.2 L291.0,366.8 L290.3,365.5 L289.6,364.1 L288.9,362.8 L288.2,361.5 L287.5,360.1 L286.8,358.8 L286.2,357.5 L285.5,356.1 L284.8,354.8 L284.1,353.4 L283.4,352.1 L282.7,350.8 L282.0,349.4 L281.4,348.1 L280.7,346.7 L280.0,345.4 L279.3,344.0 L278.7,342.7 L278.0,341.3 L277.3,340.0 L276.6,338.6 L276.0,337.3 L275.3,336.0 L274.6,334.6 L273.9,333.3 L273.3,331.9 L272.6,330.6 L271.9,329.2 L271.3,327.9 L270.6,326.5 L270.0,325.1 L269.4,323.7 L268.8,322.4 L268.2,321.0 L267.6,319.6 L267.1,318.2 L266.5,316.8 L265.9,315.4 L265.3,314.0 L264.7,312.7 L264.1,311.3 L263.5,309.9 L262.9,308.5 L262.3,307.1 L261.8,305.7 L261.2,304.3 L260.7,302.9 L260.2,301.5 L259.7,300.1 L259.2,298.6 L258.7,297.2 L258.3,295.8 L257.9,294.3 L257.4,292.9 L257.0,291.4 L256.6,290.0 L256.1,288.6 L255.7,287.1 L255.3,285.7 L254.9,284.2 L254.5,282.8 L254.1,281.3 L253.8,279.8 L253.4,278.4 L253.0,276.9 L252.6,275.5 L252.3,274.0 L251.9,272.5 L251.5,271.1 L251.1,269.6 L250.8,268.2 L250.4,266.7 L250.0,265.3 L249.6,263.8 L249.3,262.3 L248.9,260.9 L248.5,259.4 L248.1,258.0 L247.8,256.5 L247.4,255.0 L247.0,253.6 L246.7,252.1 L246.3,250.7 L246.0,249.2 L245.7,247.7 L245.4,246.2 L245.0,244.8 L244.7,243.3 L244.5,241.8 L244.2,240.3 L243.9,238.9 L243.6,237.4 L243.3,235.9 L243.0,234.4 L242.7,233.0 L242.4,231.5 L242.1,230.0 L241.8,228.5 L241.5,227.0 L241.2,225.6 L240.9,224.1 L240.6,222.6 L240.3,221.1 L240.1,219.6 L239.8,218.2 L239.6,216.7 L239.3,215.2 L239.1,213.7" fill="none" stroke="#7e7e7e" stroke-width="1.9" stroke-dasharray="5.5,4.5"/>
<path d="M239.1,213.7 L240.6,213.5 L242.2,213.3 L243.7,213.1 L245.2,212.9 L246.7,212.7 L248.3,212.5 L249.8,212.3 L251.3,212.1 L252.8,211.9 L254.4,211.7 L255.9,211.5 L257.4,211.3 L258.9,211.1 L260.5,210.9 L262.0,210.7 M464.7,229.1 L466.2,229.3 L467.7,229.5 L469.3,229.7 L470.8,229.8 L472.3,230.0 L473.8,230.2 L475.3,230.4 L476.9,230.6 L478.4,230.8 L479.9,231.0 L481.4,231.2 L482.9,231.4 L484.5,231.6 L486.0,231.8 L487.5,232.1 L489.0,232.3 M515,444.2 L487.7,514.5 L484.3,513.2" fill="none" stroke="#808080" stroke-width="1.5" stroke-dasharray="1.5,3"/>
<path d="M363.5,350.5 L371.5,358.5 M371.5,350.5 L363.5,358.5" stroke="#8a8a8a" stroke-width="1.3"/>
<path d="M362,354.5 L373,354.5 M367.5,349 L367.5,360" stroke="#fff" stroke-width="2"/>
<!-- toolbar icons -->
<circle cx="377" cy="53.9" r="7" fill="#fff"/>
<path d="M374.4,51.6 C374.4,49.6 375.6,48.7 377.2,48.7 C378.9,48.7 380,49.7 380,51.1 C380,52.9 377.9,53.2 377.9,55 L377.9,55.4" fill="none" stroke="#2d2d2d" stroke-width="2.3"/>
<rect x="376.8" y="56.8" width="2.2" height="2" fill="#2d2d2d"/>
<rect x="394" y="48" width="14" height="12.2" fill="#fff"/>
<path d="M396,58.2 L396,57.4 L399,53.1 L401.8,55.9 L403.3,55 L406,56.8 L406,58.2 Z" fill="#2d2d2d"/>
<circle cx="404.5" cy="51.3" r="1.4" fill="#2d2d2d"/>
<defs><linearGradient id="og" x1="0" y1="0" x2="0" y2="1"><stop offset="0" stop-color="#ffc088"/><stop offset="0.6" stop-color="#f8903c"/><stop offset="1" stop-color="#e8702a"/></linearGradient></defs>
<g transform="translate(421.5,61) scale(0.64,1) skewX(-8)">
<text x="-0.8" y="0.8" font-size="20" font-weight="bold" fill="#b85a22" letter-spacing="-0.5">3D</text>
<text x="0" y="0" font-size="20" font-weight="bold" fill="url(#og)" letter-spacing="-0.5">3D</text>
</g>
<path d="M440.8,50 L450.2,50 L445.5,56.4 Z" fill="#f59a40"/>
<path d="M442,50.6 L449,50.6 L445.5,53.5 Z" fill="#ffc070"/>
<!-- legend -->
<path d="M122.5,595.5 L134,595.5 M128.25,590 L128.25,601.5" stroke="#fff" stroke-width="2"/>
<path d="M224.5,592.5 L233.5,601.5 M233.5,592.5 L224.5,601.5" stroke="#a8a8a8" stroke-width="1.3"/>
<line x1="120" y1="622.5" x2="136" y2="622.5" stroke="#6e6e6e" stroke-width="2"/>
<path d="M120.3,695.5 L126.7,695.5 M130.8,695.5 L136.6,695.5" stroke="#6a6a6a" stroke-width="2"/>
<rect x="286" y="641" width="10" height="10" fill="#fff"/>
<path d="M287.3,646.3 L289.8,648.3 L294.8,643" fill="none" stroke="#2a2a2a" stroke-width="1.3"/>
</svg>
<div class="lbl" style="left:144px;top:589px">Whitepoint</div>
<div class="lbl" style="left:243px;top:589px">Whitepoint (Comparison profile)</div>
<div class="lbl" style="left:144px;top:616px">Colorspace</div>
<div class="lbl" style="left:300px;top:640px">Show outline</div>
<div class="lbl" style="left:144px;top:662px">Color temperature curve</div>
<div class="lbl" style="left:144px;top:689px">Comparison profile</div>
<div class="lbl" style="left:144px;top:716px">Rendering intent</div>
<div class="lbl" style="left:303px;top:771px;letter-spacing:-0.2px"><i>180</i>.<i>48</i> <i>49</i>.<i>38</i></div>
<div class="cb" style="left:281px;top:612px;width:269px;height:23px"><span>CIE a*b*</span><svg class="chev" width="10" height="6" viewBox="0 0 10 6"><path d="M1,1 L5,5 L9,1" fill="none" stroke="currentColor" stroke-width="1.25"/></svg></div>
<div class="cb" style="left:281px;top:658px;width:269px;height:23px"><span>&lt;None&gt;</span><svg class="chev" width="10" height="6" viewBox="0 0 10 6"><path d="M1,1 L5,5 L9,1" fill="none" stroke="currentColor" stroke-width="1.25"/></svg></div>
<div class="cb" style="left:281px;top:685px;width:269px;height:23px"><span>sRGB IEC<i>61966</i>-<i>2</i>.<i>1</i> (Equivalent to www.srgb.com)</span><svg class="chev" width="10" height="6" viewBox="0 0 10 6"><path d="M1,1 L5,5 L9,1" fill="none" stroke="currentColor" stroke-width="1.25"/></svg></div>
<div class="cb" style="left:281px;top:712px;width:269px;height:23px"><span>Absolute colorimetric</span><svg class="chev" width="10" height="6" viewBox="0 0 10 6"><path d="M1,1 L5,5 L9,1" fill="none" stroke="currentColor" stroke-width="1.25"/></svg></div>
<div class="cb dis" style="left:281px;top:739px;width:269px;height:23px"><span style="right:auto">Device</span><span style="left:55px;right:auto">A2B</span><span style="left:92px;right:auto">PCS</span><svg class="abs" style="left:42.5px;top:9.5px" width="11" height="6"><path d="M0.3,2.5 L9,2.5 M6.5,0.3 L9.3,2.5 L6.5,4.7" fill="none" stroke="#858585" stroke-width="1.1"/></svg><svg class="abs" style="left:79.5px;top:9.5px" width="11" height="6"><path d="M0.3,2.5 L9,2.5 M6.5,0.3 L9.3,2.5 L6.5,4.7" fill="none" stroke="#858585" stroke-width="1.1"/></svg><svg class="chev" width="10" height="6" viewBox="0 0 10 6"><path d="M1,1 L5,5 L9,1" fill="none" stroke="currentColor" stroke-width="1.25"/></svg></div>
<div id="split"><svg class="abs" style="left:1px;top:383px" width="11" height="12"><path d="M1.2,5.7 L5,1.5 L5,9.9 Z M9.6,5.7 L6,1.5 L6,9.9 Z" fill="#a0a0a0"/></svg></div>
<div id="table"><div style="position:absolute;left:0;top:0;width:451px;height:1px;background:#f6f6f6"></div><div class="r o" style="top:1px;height:18px"></div>
<div class="r e" style="top:19px"><span class="l" style="left:22px">Size</span><span class="v"><i>35208</i> Bytes (<i>34</i>.<i>38</i> KiB)</span></div><div class="r o" style="top:38px"><span class="l" style="left:22px">Preferred CMM</span><span class="v"><i>0</i>x<i>6172676</i>C 'argl' ArgyllCMS</span></div><div class="r e" style="top:57px"><span class="l" style="left:22px">ICC version</span><span class="v"><i>2</i>.<i>2</i></span></div><div class="r o" style="top:76px"><span class="l" style="left:22px">Profile class</span><span class="v">Display device profile</span></div><div class="r e" style="top:95px"><span class="l" style="left:22px">Color model</span><span class="v">RGB</span></div><div class="r o" style="top:114px"><span class="l" style="left:22px">Profile connection space (PCS)</span><span class="v">XYZ</span></div><div class="r e" style="top:133px"><span class="l" style="left:22px">Created</span><span class="v"><i>2024</i>-<i>10</i>-<i>21</i> <i>13</i>:<i>07</i>:<i>04</i></span></div><div class="r o" style="top:152px"><span class="l" style="left:22px">Platform</span><span class="v">Microsoft</span></div><div class="r e" style="top:171px"><span class="l" style="left:22px">Is embedded</span><span class="v">No</span></div><div class="r o" style="top:190px"><span class="l" style="left:22px">Can be used independently</span><span class="v">Yes</span></div><div class="r e" style="top:209px"><span class="l" style="left:22px">Device</span><span class="v"></span></div><div class="r o" style="top:228px"><span class="l" style="left:34px">Manufacturer</span><span class="v"><i>0</i>x<i>0000635</i>A ViewSonic Corporation</span></div><div class="r e" style="top:247px"><span class="l" style="left:34px">Model</span><span class="v"><i>0</i>x<i>00003</i>B<i>3</i>B</span></div><div class="r o" style="top:266px"><span class="l" style="left:34px">Media attributes</span><span class="v">Reflective, Glossy, Positive, Color</span></div><div class="r e" style="top:285px"><span class="l" style="left:22px">Default rendering intent</span><span class="v">Media-relative colorimetric</span></div><div class="r o" style="top:304px"><span class="l" style="left:22px">PCS illuminant XYZ</span><span class="v" style="letter-spacing:-0.22px"><i>96</i>.<i>42</i> <i>100</i>.<i>00</i>  <i>82</i>.<i>49</i> (xy <i>0</i>.<i>3457</i> <i>0</i>.<i>3585</i>, CCT <i>5000</i>K)</span></div><div class="r e" style="top:323px"><span class="l" style="left:22px">Creator</span><span class="v"><i>0</i>x<i>6172676</i>C 'argl' ArgyllCMS</span></div><div class="r o" style="top:342px"><span class="l" style="left:22px">Checksum</span><span class="v" style="letter-spacing:-0.56px"><i>0</i>x<i>62084</i>FE<i>108</i>D<i>302</i>CC<i>9</i>C<i>9</i>B<i>220</i>D<i>573704</i>E<i>9</i></span></div><div class="r e" style="top:361px"><span class="l" style="left:34px">Checksum OK</span><span class="v">Yes</span></div><div class="r o" style="top:380px"><span class="l" style="left:22px">Description (ASCII)</span><span class="v">ViewSonic XG<i>2431</i> <i>21</i>.<i>10</i>.<i>2024</i></span></div><div class="r e" style="top:399px"><span class="l" style="left:22px">Copyright</span><span class="v">No copyright. Created with DisplayCAL <i>3</i>.<i>8</i>.<i>9</i>.<i>3</i> and</span></div><div class="r o" style="top:418px"><span class="l" style="left:22px"></span><span class="v">ArgyllCMS <i>3</i>.<i>3</i>.<i>0</i></span></div><div class="r e" style="top:437px"><span class="l" style="left:22px">Device manufacturer name (ASCII)</span><span class="v">ViewSonic Corporation</span></div><div class="r o" style="top:456px"><span class="l" style="left:22px">Device model name (ASCII)</span><span class="v">XG<i>2431</i></span></div><div class="r e" style="top:475px"><span class="l" style="left:22px">Video card gamma table</span><span class="v"></span></div><div class="r o" style="top:494px"><span class="l" style="left:34px">Bitdepth</span><span class="v"><i>16</i></span></div><div class="r e" style="top:513px"><span class="l" style="left:34px">Channels</span><span class="v"><i>3</i></span></div><div class="r o" style="top:532px"><span class="l" style="left:34px">Number of entries per channel</span><span class="v"><i>256</i></span></div><div class="r e" style="top:551px"><span class="l" style="left:34px">Channel <i>1</i> gamma at <i>50</i>% input</span><span class="v"><i>1</i>.<i>00</i></span></div><div class="r o" style="top:570px"><span class="l" style="left:34px">Channel <i>1</i> minimum</span><span class="v"><i>0</i>.<i>0000</i>%</span></div><div class="r e" style="top:589px"><span class="l" style="left:34px">Channel <i>1</i> maximum</span><span class="v"><i>100</i>.<i>00</i>%</span></div><div class="r o" style="top:608px"><span class="l" style="left:34px">Channel <i>1</i> unique values</span><span class="v"><i>256</i> @ <i>8</i> Bit</span></div><div class="r e" style="top:627px"><span class="l" style="left:34px">Channel <i>1</i> is linear</span><span class="v">Yes</span></div><div class="r o" style="top:646px"><span class="l" style="left:34px">Channel <i>2</i> gamma at <i>50</i>% input</span><span class="v"><i>1</i>.<i>00</i></span></div><div class="r e" style="top:665px"><span class="l" style="left:34px">Channel <i>2</i> minimum</span><span class="v"><i>0</i>.<i>0000</i>%</span></div><div class="r o" style="top:684px"><span class="l" style="left:34px">Channel <i>2</i> maximum</span><span class="v"><i>100</i>.<i>00</i>%</span></div><div class="r e" style="top:703px"><span class="l" style="left:34px">Channel <i>2</i> unique values</span><span class="v"><i>256</i> @ <i>8</i> Bit</span></div><div class="r o" style="top:722px"><span class="l" style="left:34px">Channel <i>2</i> is linear</span><span class="v">Yes</span></div><div class="r e" style="top:741px"><span class="l" style="left:34px">Channel <i>3</i> gamma at <i>50</i>% input</span><span class="v"><i>1</i>.<i>00</i></span></div><div class="r o" style="top:760px"><span class="l" style="left:34px">Channel <i>3</i> minimum</span><span class="v"><i>0</i>.<i>0000</i>%</span></div>
</div>
<div id="sb"><div style="position:absolute;left:0;top:0;width:16px;height:1px;background:#fff"></div><div id="thumb"></div>
<svg class="abs" style="left:3px;top:5px" width="10" height="8"><path d="M1.3,6.3 L4.9,2.7 L8.5,6.3" fill="none" stroke="#505050" stroke-width="1.9"/></svg>
<svg class="abs" style="left:3px;top:767px" width="10" height="8"><path d="M1.3,1.7 L4.9,5.3 L8.5,1.7" fill="none" stroke="#505050" stroke-width="1.9"/></svg>
</div>
<div id="bord"></div>
</body></html>
